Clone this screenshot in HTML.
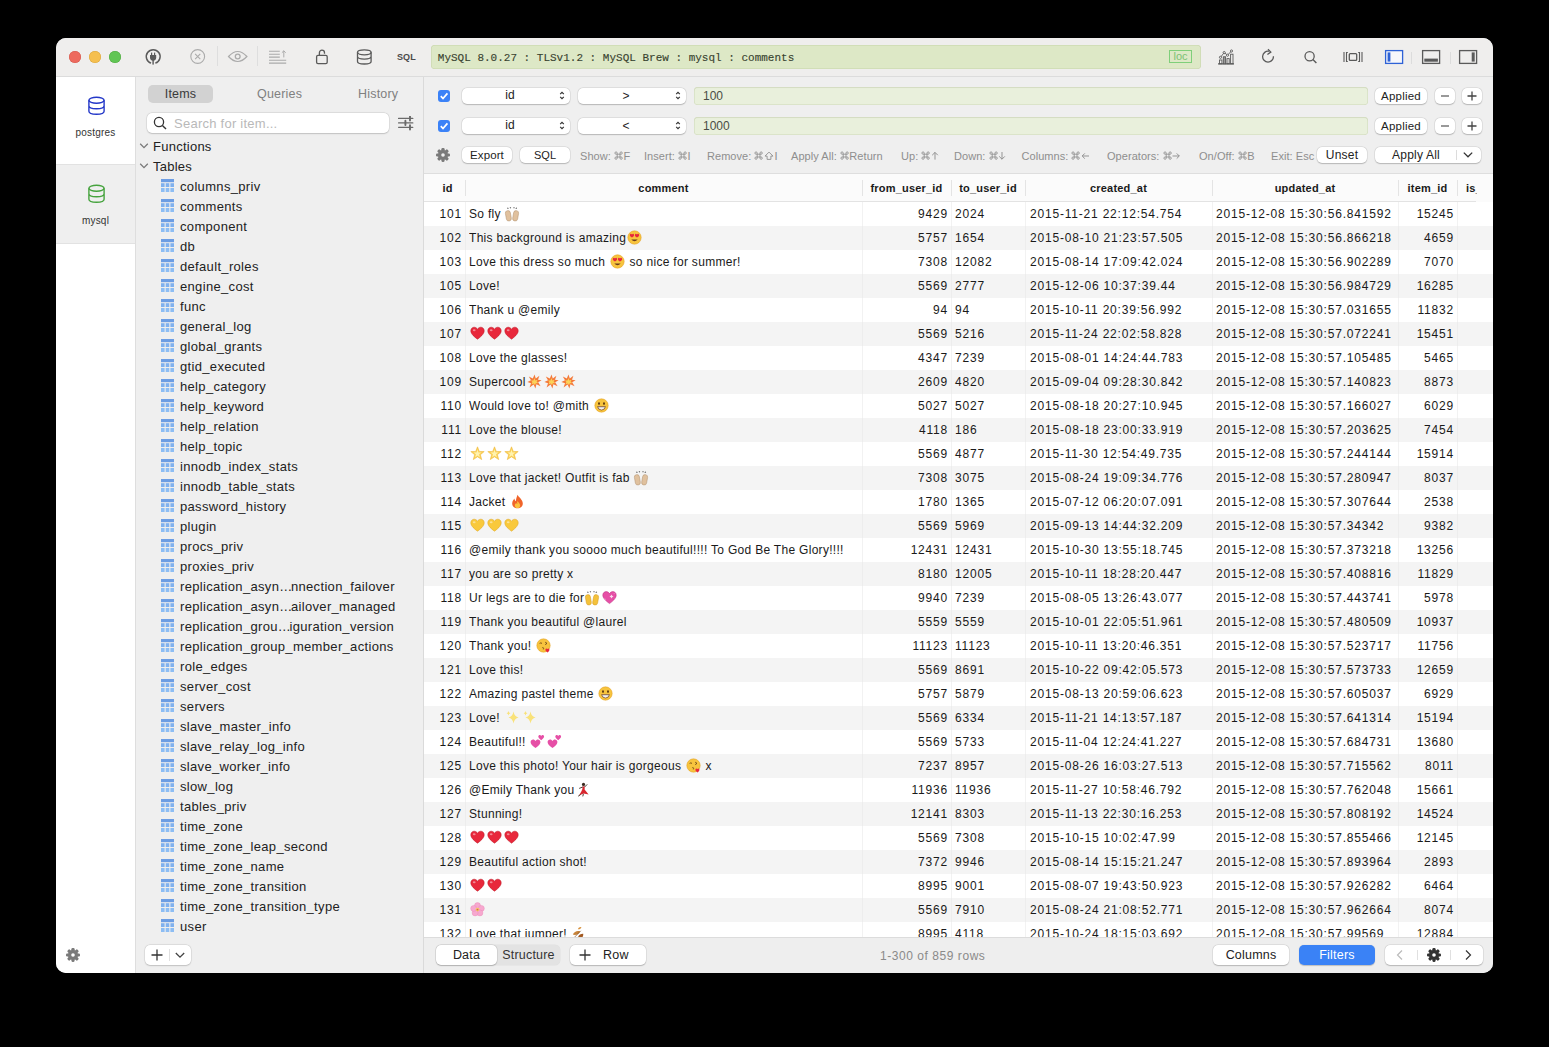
<!DOCTYPE html><html><head><meta charset="utf-8"><style>
html,body{margin:0;padding:0}
body{width:1549px;height:1047px;background:#000;position:relative;overflow:hidden;font-family:"Liberation Sans",sans-serif;color:#222}
#win{position:absolute;left:56px;top:38px;width:1437px;height:935px;border-radius:10px;overflow:hidden;background:#efefef}
#win div{position:absolute;box-sizing:border-box}
.t{white-space:pre;line-height:20px;font-size:13px;letter-spacing:0.3px}
.btn{background:#fff;border-radius:5px;box-shadow:0 0 0 0.5px rgba(0,0,0,0.09),0 0.5px 1.2px rgba(0,0,0,0.2)}
.c{white-space:pre;font-size:12px;line-height:24px;letter-spacing:0.3px;color:#1a1a1a}
.n{letter-spacing:0.8px}
</style></head><body><div id="win"><div style="left:0px;top:0px;width:1437px;height:38px;background:#efeeed"></div>
<div style="left:0px;top:38px;width:1437px;height:1px;background:#dcdcdc"></div>
<div style="left:13px;top:13px;width:12px;height:12px;border-radius:50%;background:#ed6a5e;box-shadow:inset 0 0 0 0.5px #d35a4f"></div>
<div style="left:33px;top:13px;width:12px;height:12px;border-radius:50%;background:#f5bf4f;box-shadow:inset 0 0 0 0.5px #d9a53e"></div>
<div style="left:53px;top:13px;width:12px;height:12px;border-radius:50%;background:#61c554;box-shadow:inset 0 0 0 0.5px #52a842"></div>
<svg style="position:absolute;left:88px;top:9px;" width="19" height="19" viewBox="0 0 19 19"><path d="M7.07 16.16 A6.9 6.9 0 1 1 11.33 16.16" fill="none" stroke="#5a5a5a" stroke-width="1.5"/><path d="M6 8h6.2v2.6a3.1 3.1 0 0 1-6.2 0z" fill="#5a5a5a"/><rect x="7" y="5.6" width="1.2" height="3" fill="#5a5a5a"/><rect x="10" y="5.6" width="1.2" height="3" fill="#5a5a5a"/><rect x="8.4" y="12" width="1.4" height="5.6" fill="#5a5a5a"/></svg>
<svg style="position:absolute;left:133px;top:10px;" width="18" height="18" viewBox="0 0 18 18"><circle cx="8.7" cy="8.5" r="6.9" fill="none" stroke="#ababab" stroke-width="1.1"/><path d="M6.1 5.9l5.2 5.2M11.3 5.9l-5.2 5.2" stroke="#ababab" stroke-width="1.1"/></svg>
<div style="left:161px;top:8px;width:1px;height:20px;background:#dedede"></div>
<svg style="position:absolute;left:171px;top:11px;" width="22" height="15" viewBox="0 0 22 15"><path d="M1.5 7.5 Q10.7 -2.5 19.9 7.5 Q10.7 17.5 1.5 7.5z" fill="none" stroke="#ababab" stroke-width="1.2"/><circle cx="10.7" cy="7.5" r="2.4" fill="none" stroke="#ababab" stroke-width="1.3"/></svg>
<div style="left:201px;top:8px;width:1px;height:20px;background:#dedede"></div>
<svg style="position:absolute;left:212px;top:11px;" width="20" height="16" viewBox="0 0 20 16"><path d="M1 2.3h10.8M1 5.2h10.8M1 8.1h10.8M1 11.2h17.2M1 14.1h17.2" stroke="#ababab" stroke-width="1.1"/><path d="M15.8 8.4V1.8M13.9 3.7L15.8 1.8 17.7 3.7" fill="none" stroke="#ababab" stroke-width="1"/></svg>
<svg style="position:absolute;left:258px;top:10px;" width="16" height="18" viewBox="0 0 16 18"><rect x="2.6" y="7.3" width="10.6" height="8.3" rx="1.4" fill="none" stroke="#5a5a5a" stroke-width="1.3"/><path d="M5.4 7.3V4.7a2.55 2.55 0 0 1 5.1 0v1" fill="none" stroke="#5a5a5a" stroke-width="1.3"/></svg>
<svg style="position:absolute;left:299px;top:9px;" width="19" height="19" viewBox="0 0 19 19"><ellipse cx="9.3" cy="5.3" rx="6.8" ry="2.5" fill="none" stroke="#5a5a5a" stroke-width="1.3"/><path d="M2.5 5.3v9.2c0 1.4 3 2.5 6.8 2.5s6.8-1.1 6.8-2.5V5.3M2.5 9.6c0 1.4 3 2.5 6.8 2.5s6.8-1.1 6.8-2.5" fill="none" stroke="#5a5a5a" stroke-width="1.3"/></svg>
<div class="t" style="left:341px;top:9px;font-size:9px;font-weight:bold;color:#4a4a4a;letter-spacing:0.1px">SQL</div>
<div style="left:375px;top:7px;width:770px;height:24px;background:#dde8c6;border-radius:4px;box-shadow:inset 0 0 0 0.5px #c5d3a8"></div>
<div class="t" style="left:381.8px;top:9.799999999999997px;font-family:Liberation Mono,monospace;font-size:11px;color:#38422f;letter-spacing:0;-webkit-text-stroke:0.12px #38422f">MySQL 8.0.27 : TLSv1.2 : MySQL Brew : mysql : comments</div>
<div style="left:1113px;top:12px;width:23px;height:13px;border:1px solid #7fcf7a;"></div>
<div class="t" style="left:1113px;top:8px;width:23px;text-align:center;font-size:11px;color:#7cc274;letter-spacing:0">loc</div>
<svg style="position:absolute;left:1160px;top:9px;" width="20" height="19" viewBox="0 0 20 19"><path d="M2 16.9h16" stroke="#5a5a5a" stroke-width="1.1"/><rect x="3.5" y="13" width="2.4" height="3.8" fill="none" stroke="#5a5a5a" stroke-width="0.9"/><rect x="7.3" y="9.8" width="2.3" height="7" fill="#9a9a9a" stroke="#5a5a5a" stroke-width="0.9"/><rect x="11" y="11.6" width="2.2" height="5.2" fill="none" stroke="#5a5a5a" stroke-width="0.9"/><rect x="14.6" y="7.2" width="2.4" height="9.6" fill="none" stroke="#5a5a5a" stroke-width="0.9"/><path d="M4.5 10.3L8.2 5.6 11.5 8.2 15.5 4" fill="none" stroke="#5a5a5a" stroke-width="0.9"/><circle cx="4.5" cy="10.3" r="1.1" fill="#efeeed" stroke="#5a5a5a" stroke-width="0.9"/><circle cx="8.2" cy="5.6" r="1.1" fill="#efeeed" stroke="#5a5a5a" stroke-width="0.9"/><circle cx="11.5" cy="8.2" r="1.1" fill="#efeeed" stroke="#5a5a5a" stroke-width="0.9"/><circle cx="15.5" cy="4" r="1.1" fill="#efeeed" stroke="#5a5a5a" stroke-width="0.9"/></svg>
<svg style="position:absolute;left:1203px;top:9px;" width="18" height="19" viewBox="0 0 18 19"><path d="M14.4 9.2 A5.4 5.4 0 1 1 9.9 4.3" fill="none" stroke="#5a5a5a" stroke-width="1.3"/><path d="M9 2.2 L11.8 5.1 8.4 7.6" fill="none" stroke="#5a5a5a" stroke-width="1.3" stroke-linejoin="miter"/></svg>
<svg style="position:absolute;left:1245px;top:10px;" width="18" height="18" viewBox="0 0 18 18"><circle cx="8.6" cy="8.3" r="4.6" fill="none" stroke="#5a5a5a" stroke-width="1.3"/><path d="M11.9 11.6L15.4 15.1" stroke="#5a5a5a" stroke-width="1.4"/></svg>
<svg style="position:absolute;left:1285px;top:11px;" width="22" height="16" viewBox="0 0 22 16"><path d="M3 3v10M21 3v10" stroke="#5a5a5a" stroke-width="1.1"/><path d="M6.8 3.5H5.5v9h1.3M17.2 3.5h1.3v9h-1.3" fill="none" stroke="#5a5a5a" stroke-width="1.1"/><rect x="8.3" y="4.6" width="7.4" height="6.8" rx="1" fill="none" stroke="#5a5a5a" stroke-width="1.3"/></svg>
<svg style="position:absolute;left:1328px;top:11px;" width="21" height="17" viewBox="0 0 21 17"><rect x="1.6" y="1.6" width="17" height="12.8" fill="#f6f7fb" stroke="#2e62d6" stroke-width="1.3"/><rect x="3.6" y="3.4" width="2.8" height="9.2" fill="#2e62d6"/></svg>
<div style="left:1355px;top:14px;width:1px;height:12px;background:#dcdcdc"></div>
<svg style="position:absolute;left:1365px;top:11px;" width="21" height="17" viewBox="0 0 21 17"><rect x="1.6" y="1.6" width="17" height="12.8" fill="none" stroke="#5a5a5a" stroke-width="1.3"/><rect x="3.3" y="9.6" width="13.6" height="3.1" fill="#5a5a5a"/></svg>
<div style="left:1394px;top:14px;width:1px;height:12px;background:#dcdcdc"></div>
<svg style="position:absolute;left:1402px;top:11px;" width="21" height="17" viewBox="0 0 21 17"><rect x="1.6" y="1.6" width="17" height="12.8" fill="none" stroke="#5a5a5a" stroke-width="1.3"/><rect x="13.7" y="3.4" width="3" height="9.2" fill="#5a5a5a"/></svg>
<div style="left:0px;top:39px;width:79px;height:896px;background:#ffffff"></div>
<div style="left:79px;top:39px;width:1px;height:896px;background:#dedede"></div>
<div style="left:0px;top:126px;width:79px;height:1px;background:#e2e2e2"></div>
<div style="left:0px;top:127px;width:79px;height:78px;background:#efefef"></div>
<div style="left:0px;top:205px;width:79px;height:1px;background:#e2e2e2"></div>
<svg style="position:absolute;left:31px;top:58px;" width="19" height="20" viewBox="0 0 19 20"><ellipse cx="9.5" cy="4.3" rx="7.6" ry="3" fill="none" stroke="#2438c8" stroke-width="1.4"/><path d="M1.9 4.3v11c0 1.7 3.4 3 7.6 3s7.6-1.3 7.6-3v-11M1.9 9.8c0 1.7 3.4 3 7.6 3s7.6-1.3 7.6-3" fill="none" stroke="#2438c8" stroke-width="1.4"/></svg>
<div class="t" style="left:0px;top:85px;width:79px;text-align:center;font-size:10px;color:#333;letter-spacing:0.2px">postgres</div>
<svg style="position:absolute;left:31px;top:146px;" width="19" height="20" viewBox="0 0 19 20"><ellipse cx="9.5" cy="4.3" rx="7.6" ry="3" fill="none" stroke="#46a33e" stroke-width="1.4"/><path d="M1.9 4.3v11c0 1.7 3.4 3 7.6 3s7.6-1.3 7.6-3v-11M1.9 9.8c0 1.7 3.4 3 7.6 3s7.6-1.3 7.6-3" fill="none" stroke="#46a33e" stroke-width="1.4"/></svg>
<div class="t" style="left:0px;top:173px;width:79px;text-align:center;font-size:10px;color:#333;letter-spacing:0.2px">mysql</div>
<svg style="position:absolute;left:10px;top:910px;" width="14" height="14" viewBox="0 0 14 14"><g fill="#7a7a7a"><rect x="5.39" y="0" width="3.22" height="14.00" rx="1.13" transform="rotate(0 7.0 7.0)"/><rect x="5.39" y="0" width="3.22" height="14.00" rx="1.13" transform="rotate(45 7.0 7.0)"/><rect x="5.39" y="0" width="3.22" height="14.00" rx="1.13" transform="rotate(90 7.0 7.0)"/><rect x="5.39" y="0" width="3.22" height="14.00" rx="1.13" transform="rotate(135 7.0 7.0)"/><circle cx="7.0" cy="7.0" r="5.04"/></g><circle cx="7.0" cy="7.0" r="1.82" fill="#fff"/></svg>
<div style="left:80px;top:39px;width:287px;height:896px;background:#efefef"></div>
<div style="left:367px;top:39px;width:1px;height:896px;background:#dadada"></div>
<div style="left:92px;top:47px;width:65px;height:18px;background:#d2d2d2;border-radius:5px"></div>
<div class="t" style="left:92px;top:46px;width:65px;text-align:center;font-size:12.5px;color:#3a3a3a;letter-spacing:0.2px">Items</div>
<div class="t" style="left:201px;top:46px;font-size:12.5px;color:#808080;letter-spacing:0.2px">Queries</div>
<div class="t" style="left:302px;top:46px;font-size:12.5px;color:#808080;letter-spacing:0.2px">History</div>
<div style="left:91px;top:75px;width:242px;height:20px;background:#fff;border-radius:5px;box-shadow:0 0 0 0.5px rgba(0,0,0,0.10),0 0.5px 1.5px rgba(0,0,0,0.15)"></div>
<svg style="position:absolute;left:97px;top:78px;" width="15" height="15" viewBox="0 0 15 15"><circle cx="6" cy="6" r="4.6" fill="none" stroke="#333" stroke-width="1.3"/><path d="M9.4 9.4L13 13" stroke="#333" stroke-width="1.4"/></svg>
<div class="t" style="left:118px;top:76px;font-size:13px;color:#b9b9b9;letter-spacing:0.25px">Search for item...</div>
<svg style="position:absolute;left:342px;top:78px;" width="16" height="15" viewBox="0 0 16 15"><path d="M0.6 2.4h14.2M0.6 6.9h14.2M0.6 11.3h14.2" stroke="#6a6a6a" stroke-width="1.3" stroke-linecap="round"/><path d="M12 0.2v4.4M7.4 4.7v4.4M12 9.1v4.4" stroke="#6a6a6a" stroke-width="1.9" stroke-linecap="round"/></svg>
<svg style="position:absolute;left:83px;top:104px;" width="10" height="8" viewBox="0 0 10 8"><path d="M1.2 1.8L5 5.6 8.8 1.8" fill="none" stroke="#7a7a7a" stroke-width="1.3"/></svg>
<div class="t" style="left:97px;top:98.5px;font-size:13px;color:#222;letter-spacing:0.25px">Functions</div>
<svg style="position:absolute;left:83px;top:124px;" width="10" height="8" viewBox="0 0 10 8"><path d="M1.2 1.8L5 5.6 8.8 1.8" fill="none" stroke="#7a7a7a" stroke-width="1.3"/></svg>
<div class="t" style="left:97px;top:118.5px;font-size:13px;color:#222;letter-spacing:0.25px">Tables</div>
<svg style="position:absolute;left:105px;top:141px;" width="13" height="13" viewBox="0 0 13 13"><rect x="0" y="0" width="13" height="3.2" fill="#6c9de3"/><rect x="0" y="4.2" width="3.6" height="3.8" fill="#80b1ee"/><rect x="4.7" y="4.2" width="3.6" height="3.8" fill="#80b1ee"/><rect x="9.4" y="4.2" width="3.6" height="3.8" fill="#80b1ee"/><rect x="0" y="9" width="3.6" height="4" fill="#8dbdf3"/><rect x="4.7" y="9" width="3.6" height="4" fill="#8dbdf3"/><rect x="9.4" y="9" width="3.6" height="4" fill="#8dbdf3"/></svg>
<div class="t" style="left:124px;top:138.6px;font-size:13px;color:#222;letter-spacing:0.33px">columns_priv</div>
<svg style="position:absolute;left:105px;top:161px;" width="13" height="13" viewBox="0 0 13 13"><rect x="0" y="0" width="13" height="3.2" fill="#6c9de3"/><rect x="0" y="4.2" width="3.6" height="3.8" fill="#80b1ee"/><rect x="4.7" y="4.2" width="3.6" height="3.8" fill="#80b1ee"/><rect x="9.4" y="4.2" width="3.6" height="3.8" fill="#80b1ee"/><rect x="0" y="9" width="3.6" height="4" fill="#8dbdf3"/><rect x="4.7" y="9" width="3.6" height="4" fill="#8dbdf3"/><rect x="9.4" y="9" width="3.6" height="4" fill="#8dbdf3"/></svg>
<div class="t" style="left:124px;top:158.6px;font-size:13px;color:#222;letter-spacing:0.33px">comments</div>
<svg style="position:absolute;left:105px;top:181px;" width="13" height="13" viewBox="0 0 13 13"><rect x="0" y="0" width="13" height="3.2" fill="#6c9de3"/><rect x="0" y="4.2" width="3.6" height="3.8" fill="#80b1ee"/><rect x="4.7" y="4.2" width="3.6" height="3.8" fill="#80b1ee"/><rect x="9.4" y="4.2" width="3.6" height="3.8" fill="#80b1ee"/><rect x="0" y="9" width="3.6" height="4" fill="#8dbdf3"/><rect x="4.7" y="9" width="3.6" height="4" fill="#8dbdf3"/><rect x="9.4" y="9" width="3.6" height="4" fill="#8dbdf3"/></svg>
<div class="t" style="left:124px;top:178.6px;font-size:13px;color:#222;letter-spacing:0.33px">component</div>
<svg style="position:absolute;left:105px;top:201px;" width="13" height="13" viewBox="0 0 13 13"><rect x="0" y="0" width="13" height="3.2" fill="#6c9de3"/><rect x="0" y="4.2" width="3.6" height="3.8" fill="#80b1ee"/><rect x="4.7" y="4.2" width="3.6" height="3.8" fill="#80b1ee"/><rect x="9.4" y="4.2" width="3.6" height="3.8" fill="#80b1ee"/><rect x="0" y="9" width="3.6" height="4" fill="#8dbdf3"/><rect x="4.7" y="9" width="3.6" height="4" fill="#8dbdf3"/><rect x="9.4" y="9" width="3.6" height="4" fill="#8dbdf3"/></svg>
<div class="t" style="left:124px;top:198.6px;font-size:13px;color:#222;letter-spacing:0.33px">db</div>
<svg style="position:absolute;left:105px;top:221px;" width="13" height="13" viewBox="0 0 13 13"><rect x="0" y="0" width="13" height="3.2" fill="#6c9de3"/><rect x="0" y="4.2" width="3.6" height="3.8" fill="#80b1ee"/><rect x="4.7" y="4.2" width="3.6" height="3.8" fill="#80b1ee"/><rect x="9.4" y="4.2" width="3.6" height="3.8" fill="#80b1ee"/><rect x="0" y="9" width="3.6" height="4" fill="#8dbdf3"/><rect x="4.7" y="9" width="3.6" height="4" fill="#8dbdf3"/><rect x="9.4" y="9" width="3.6" height="4" fill="#8dbdf3"/></svg>
<div class="t" style="left:124px;top:218.60000000000002px;font-size:13px;color:#222;letter-spacing:0.33px">default_roles</div>
<svg style="position:absolute;left:105px;top:241px;" width="13" height="13" viewBox="0 0 13 13"><rect x="0" y="0" width="13" height="3.2" fill="#6c9de3"/><rect x="0" y="4.2" width="3.6" height="3.8" fill="#80b1ee"/><rect x="4.7" y="4.2" width="3.6" height="3.8" fill="#80b1ee"/><rect x="9.4" y="4.2" width="3.6" height="3.8" fill="#80b1ee"/><rect x="0" y="9" width="3.6" height="4" fill="#8dbdf3"/><rect x="4.7" y="9" width="3.6" height="4" fill="#8dbdf3"/><rect x="9.4" y="9" width="3.6" height="4" fill="#8dbdf3"/></svg>
<div class="t" style="left:124px;top:238.60000000000002px;font-size:13px;color:#222;letter-spacing:0.33px">engine_cost</div>
<svg style="position:absolute;left:105px;top:261px;" width="13" height="13" viewBox="0 0 13 13"><rect x="0" y="0" width="13" height="3.2" fill="#6c9de3"/><rect x="0" y="4.2" width="3.6" height="3.8" fill="#80b1ee"/><rect x="4.7" y="4.2" width="3.6" height="3.8" fill="#80b1ee"/><rect x="9.4" y="4.2" width="3.6" height="3.8" fill="#80b1ee"/><rect x="0" y="9" width="3.6" height="4" fill="#8dbdf3"/><rect x="4.7" y="9" width="3.6" height="4" fill="#8dbdf3"/><rect x="9.4" y="9" width="3.6" height="4" fill="#8dbdf3"/></svg>
<div class="t" style="left:124px;top:258.6px;font-size:13px;color:#222;letter-spacing:0.33px">func</div>
<svg style="position:absolute;left:105px;top:281px;" width="13" height="13" viewBox="0 0 13 13"><rect x="0" y="0" width="13" height="3.2" fill="#6c9de3"/><rect x="0" y="4.2" width="3.6" height="3.8" fill="#80b1ee"/><rect x="4.7" y="4.2" width="3.6" height="3.8" fill="#80b1ee"/><rect x="9.4" y="4.2" width="3.6" height="3.8" fill="#80b1ee"/><rect x="0" y="9" width="3.6" height="4" fill="#8dbdf3"/><rect x="4.7" y="9" width="3.6" height="4" fill="#8dbdf3"/><rect x="9.4" y="9" width="3.6" height="4" fill="#8dbdf3"/></svg>
<div class="t" style="left:124px;top:278.6px;font-size:13px;color:#222;letter-spacing:0.33px">general_log</div>
<svg style="position:absolute;left:105px;top:301px;" width="13" height="13" viewBox="0 0 13 13"><rect x="0" y="0" width="13" height="3.2" fill="#6c9de3"/><rect x="0" y="4.2" width="3.6" height="3.8" fill="#80b1ee"/><rect x="4.7" y="4.2" width="3.6" height="3.8" fill="#80b1ee"/><rect x="9.4" y="4.2" width="3.6" height="3.8" fill="#80b1ee"/><rect x="0" y="9" width="3.6" height="4" fill="#8dbdf3"/><rect x="4.7" y="9" width="3.6" height="4" fill="#8dbdf3"/><rect x="9.4" y="9" width="3.6" height="4" fill="#8dbdf3"/></svg>
<div class="t" style="left:124px;top:298.6px;font-size:13px;color:#222;letter-spacing:0.33px">global_grants</div>
<svg style="position:absolute;left:105px;top:321px;" width="13" height="13" viewBox="0 0 13 13"><rect x="0" y="0" width="13" height="3.2" fill="#6c9de3"/><rect x="0" y="4.2" width="3.6" height="3.8" fill="#80b1ee"/><rect x="4.7" y="4.2" width="3.6" height="3.8" fill="#80b1ee"/><rect x="9.4" y="4.2" width="3.6" height="3.8" fill="#80b1ee"/><rect x="0" y="9" width="3.6" height="4" fill="#8dbdf3"/><rect x="4.7" y="9" width="3.6" height="4" fill="#8dbdf3"/><rect x="9.4" y="9" width="3.6" height="4" fill="#8dbdf3"/></svg>
<div class="t" style="left:124px;top:318.6px;font-size:13px;color:#222;letter-spacing:0.33px">gtid_executed</div>
<svg style="position:absolute;left:105px;top:341px;" width="13" height="13" viewBox="0 0 13 13"><rect x="0" y="0" width="13" height="3.2" fill="#6c9de3"/><rect x="0" y="4.2" width="3.6" height="3.8" fill="#80b1ee"/><rect x="4.7" y="4.2" width="3.6" height="3.8" fill="#80b1ee"/><rect x="9.4" y="4.2" width="3.6" height="3.8" fill="#80b1ee"/><rect x="0" y="9" width="3.6" height="4" fill="#8dbdf3"/><rect x="4.7" y="9" width="3.6" height="4" fill="#8dbdf3"/><rect x="9.4" y="9" width="3.6" height="4" fill="#8dbdf3"/></svg>
<div class="t" style="left:124px;top:338.6px;font-size:13px;color:#222;letter-spacing:0.33px">help_category</div>
<svg style="position:absolute;left:105px;top:361px;" width="13" height="13" viewBox="0 0 13 13"><rect x="0" y="0" width="13" height="3.2" fill="#6c9de3"/><rect x="0" y="4.2" width="3.6" height="3.8" fill="#80b1ee"/><rect x="4.7" y="4.2" width="3.6" height="3.8" fill="#80b1ee"/><rect x="9.4" y="4.2" width="3.6" height="3.8" fill="#80b1ee"/><rect x="0" y="9" width="3.6" height="4" fill="#8dbdf3"/><rect x="4.7" y="9" width="3.6" height="4" fill="#8dbdf3"/><rect x="9.4" y="9" width="3.6" height="4" fill="#8dbdf3"/></svg>
<div class="t" style="left:124px;top:358.6px;font-size:13px;color:#222;letter-spacing:0.33px">help_keyword</div>
<svg style="position:absolute;left:105px;top:381px;" width="13" height="13" viewBox="0 0 13 13"><rect x="0" y="0" width="13" height="3.2" fill="#6c9de3"/><rect x="0" y="4.2" width="3.6" height="3.8" fill="#80b1ee"/><rect x="4.7" y="4.2" width="3.6" height="3.8" fill="#80b1ee"/><rect x="9.4" y="4.2" width="3.6" height="3.8" fill="#80b1ee"/><rect x="0" y="9" width="3.6" height="4" fill="#8dbdf3"/><rect x="4.7" y="9" width="3.6" height="4" fill="#8dbdf3"/><rect x="9.4" y="9" width="3.6" height="4" fill="#8dbdf3"/></svg>
<div class="t" style="left:124px;top:378.6px;font-size:13px;color:#222;letter-spacing:0.33px">help_relation</div>
<svg style="position:absolute;left:105px;top:401px;" width="13" height="13" viewBox="0 0 13 13"><rect x="0" y="0" width="13" height="3.2" fill="#6c9de3"/><rect x="0" y="4.2" width="3.6" height="3.8" fill="#80b1ee"/><rect x="4.7" y="4.2" width="3.6" height="3.8" fill="#80b1ee"/><rect x="9.4" y="4.2" width="3.6" height="3.8" fill="#80b1ee"/><rect x="0" y="9" width="3.6" height="4" fill="#8dbdf3"/><rect x="4.7" y="9" width="3.6" height="4" fill="#8dbdf3"/><rect x="9.4" y="9" width="3.6" height="4" fill="#8dbdf3"/></svg>
<div class="t" style="left:124px;top:398.6px;font-size:13px;color:#222;letter-spacing:0.33px">help_topic</div>
<svg style="position:absolute;left:105px;top:421px;" width="13" height="13" viewBox="0 0 13 13"><rect x="0" y="0" width="13" height="3.2" fill="#6c9de3"/><rect x="0" y="4.2" width="3.6" height="3.8" fill="#80b1ee"/><rect x="4.7" y="4.2" width="3.6" height="3.8" fill="#80b1ee"/><rect x="9.4" y="4.2" width="3.6" height="3.8" fill="#80b1ee"/><rect x="0" y="9" width="3.6" height="4" fill="#8dbdf3"/><rect x="4.7" y="9" width="3.6" height="4" fill="#8dbdf3"/><rect x="9.4" y="9" width="3.6" height="4" fill="#8dbdf3"/></svg>
<div class="t" style="left:124px;top:418.6px;font-size:13px;color:#222;letter-spacing:0.33px">innodb_index_stats</div>
<svg style="position:absolute;left:105px;top:441px;" width="13" height="13" viewBox="0 0 13 13"><rect x="0" y="0" width="13" height="3.2" fill="#6c9de3"/><rect x="0" y="4.2" width="3.6" height="3.8" fill="#80b1ee"/><rect x="4.7" y="4.2" width="3.6" height="3.8" fill="#80b1ee"/><rect x="9.4" y="4.2" width="3.6" height="3.8" fill="#80b1ee"/><rect x="0" y="9" width="3.6" height="4" fill="#8dbdf3"/><rect x="4.7" y="9" width="3.6" height="4" fill="#8dbdf3"/><rect x="9.4" y="9" width="3.6" height="4" fill="#8dbdf3"/></svg>
<div class="t" style="left:124px;top:438.6px;font-size:13px;color:#222;letter-spacing:0.33px">innodb_table_stats</div>
<svg style="position:absolute;left:105px;top:461px;" width="13" height="13" viewBox="0 0 13 13"><rect x="0" y="0" width="13" height="3.2" fill="#6c9de3"/><rect x="0" y="4.2" width="3.6" height="3.8" fill="#80b1ee"/><rect x="4.7" y="4.2" width="3.6" height="3.8" fill="#80b1ee"/><rect x="9.4" y="4.2" width="3.6" height="3.8" fill="#80b1ee"/><rect x="0" y="9" width="3.6" height="4" fill="#8dbdf3"/><rect x="4.7" y="9" width="3.6" height="4" fill="#8dbdf3"/><rect x="9.4" y="9" width="3.6" height="4" fill="#8dbdf3"/></svg>
<div class="t" style="left:124px;top:458.6px;font-size:13px;color:#222;letter-spacing:0.33px">password_history</div>
<svg style="position:absolute;left:105px;top:481px;" width="13" height="13" viewBox="0 0 13 13"><rect x="0" y="0" width="13" height="3.2" fill="#6c9de3"/><rect x="0" y="4.2" width="3.6" height="3.8" fill="#80b1ee"/><rect x="4.7" y="4.2" width="3.6" height="3.8" fill="#80b1ee"/><rect x="9.4" y="4.2" width="3.6" height="3.8" fill="#80b1ee"/><rect x="0" y="9" width="3.6" height="4" fill="#8dbdf3"/><rect x="4.7" y="9" width="3.6" height="4" fill="#8dbdf3"/><rect x="9.4" y="9" width="3.6" height="4" fill="#8dbdf3"/></svg>
<div class="t" style="left:124px;top:478.6px;font-size:13px;color:#222;letter-spacing:0.33px">plugin</div>
<svg style="position:absolute;left:105px;top:501px;" width="13" height="13" viewBox="0 0 13 13"><rect x="0" y="0" width="13" height="3.2" fill="#6c9de3"/><rect x="0" y="4.2" width="3.6" height="3.8" fill="#80b1ee"/><rect x="4.7" y="4.2" width="3.6" height="3.8" fill="#80b1ee"/><rect x="9.4" y="4.2" width="3.6" height="3.8" fill="#80b1ee"/><rect x="0" y="9" width="3.6" height="4" fill="#8dbdf3"/><rect x="4.7" y="9" width="3.6" height="4" fill="#8dbdf3"/><rect x="9.4" y="9" width="3.6" height="4" fill="#8dbdf3"/></svg>
<div class="t" style="left:124px;top:498.6px;font-size:13px;color:#222;letter-spacing:0.33px">procs_priv</div>
<svg style="position:absolute;left:105px;top:521px;" width="13" height="13" viewBox="0 0 13 13"><rect x="0" y="0" width="13" height="3.2" fill="#6c9de3"/><rect x="0" y="4.2" width="3.6" height="3.8" fill="#80b1ee"/><rect x="4.7" y="4.2" width="3.6" height="3.8" fill="#80b1ee"/><rect x="9.4" y="4.2" width="3.6" height="3.8" fill="#80b1ee"/><rect x="0" y="9" width="3.6" height="4" fill="#8dbdf3"/><rect x="4.7" y="9" width="3.6" height="4" fill="#8dbdf3"/><rect x="9.4" y="9" width="3.6" height="4" fill="#8dbdf3"/></svg>
<div class="t" style="left:124px;top:518.6px;font-size:13px;color:#222;letter-spacing:0.33px">proxies_priv</div>
<svg style="position:absolute;left:105px;top:541px;" width="13" height="13" viewBox="0 0 13 13"><rect x="0" y="0" width="13" height="3.2" fill="#6c9de3"/><rect x="0" y="4.2" width="3.6" height="3.8" fill="#80b1ee"/><rect x="4.7" y="4.2" width="3.6" height="3.8" fill="#80b1ee"/><rect x="9.4" y="4.2" width="3.6" height="3.8" fill="#80b1ee"/><rect x="0" y="9" width="3.6" height="4" fill="#8dbdf3"/><rect x="4.7" y="9" width="3.6" height="4" fill="#8dbdf3"/><rect x="9.4" y="9" width="3.6" height="4" fill="#8dbdf3"/></svg>
<div class="t" style="left:124px;top:538.6px;font-size:13px;color:#222;letter-spacing:0.33px">replication_asyn<span style="letter-spacing:-1.3px">…</span>nnection_failover</div>
<svg style="position:absolute;left:105px;top:561px;" width="13" height="13" viewBox="0 0 13 13"><rect x="0" y="0" width="13" height="3.2" fill="#6c9de3"/><rect x="0" y="4.2" width="3.6" height="3.8" fill="#80b1ee"/><rect x="4.7" y="4.2" width="3.6" height="3.8" fill="#80b1ee"/><rect x="9.4" y="4.2" width="3.6" height="3.8" fill="#80b1ee"/><rect x="0" y="9" width="3.6" height="4" fill="#8dbdf3"/><rect x="4.7" y="9" width="3.6" height="4" fill="#8dbdf3"/><rect x="9.4" y="9" width="3.6" height="4" fill="#8dbdf3"/></svg>
<div class="t" style="left:124px;top:558.6px;font-size:13px;color:#222;letter-spacing:0.33px">replication_asyn<span style="letter-spacing:-1.3px">…</span>ailover_managed</div>
<svg style="position:absolute;left:105px;top:581px;" width="13" height="13" viewBox="0 0 13 13"><rect x="0" y="0" width="13" height="3.2" fill="#6c9de3"/><rect x="0" y="4.2" width="3.6" height="3.8" fill="#80b1ee"/><rect x="4.7" y="4.2" width="3.6" height="3.8" fill="#80b1ee"/><rect x="9.4" y="4.2" width="3.6" height="3.8" fill="#80b1ee"/><rect x="0" y="9" width="3.6" height="4" fill="#8dbdf3"/><rect x="4.7" y="9" width="3.6" height="4" fill="#8dbdf3"/><rect x="9.4" y="9" width="3.6" height="4" fill="#8dbdf3"/></svg>
<div class="t" style="left:124px;top:578.6px;font-size:13px;color:#222;letter-spacing:0.33px">replication_grou<span style="letter-spacing:-1.3px">…</span>iguration_version</div>
<svg style="position:absolute;left:105px;top:601px;" width="13" height="13" viewBox="0 0 13 13"><rect x="0" y="0" width="13" height="3.2" fill="#6c9de3"/><rect x="0" y="4.2" width="3.6" height="3.8" fill="#80b1ee"/><rect x="4.7" y="4.2" width="3.6" height="3.8" fill="#80b1ee"/><rect x="9.4" y="4.2" width="3.6" height="3.8" fill="#80b1ee"/><rect x="0" y="9" width="3.6" height="4" fill="#8dbdf3"/><rect x="4.7" y="9" width="3.6" height="4" fill="#8dbdf3"/><rect x="9.4" y="9" width="3.6" height="4" fill="#8dbdf3"/></svg>
<div class="t" style="left:124px;top:598.6px;font-size:13px;color:#222;letter-spacing:0.33px">replication_group_member_actions</div>
<svg style="position:absolute;left:105px;top:621px;" width="13" height="13" viewBox="0 0 13 13"><rect x="0" y="0" width="13" height="3.2" fill="#6c9de3"/><rect x="0" y="4.2" width="3.6" height="3.8" fill="#80b1ee"/><rect x="4.7" y="4.2" width="3.6" height="3.8" fill="#80b1ee"/><rect x="9.4" y="4.2" width="3.6" height="3.8" fill="#80b1ee"/><rect x="0" y="9" width="3.6" height="4" fill="#8dbdf3"/><rect x="4.7" y="9" width="3.6" height="4" fill="#8dbdf3"/><rect x="9.4" y="9" width="3.6" height="4" fill="#8dbdf3"/></svg>
<div class="t" style="left:124px;top:618.6px;font-size:13px;color:#222;letter-spacing:0.33px">role_edges</div>
<svg style="position:absolute;left:105px;top:641px;" width="13" height="13" viewBox="0 0 13 13"><rect x="0" y="0" width="13" height="3.2" fill="#6c9de3"/><rect x="0" y="4.2" width="3.6" height="3.8" fill="#80b1ee"/><rect x="4.7" y="4.2" width="3.6" height="3.8" fill="#80b1ee"/><rect x="9.4" y="4.2" width="3.6" height="3.8" fill="#80b1ee"/><rect x="0" y="9" width="3.6" height="4" fill="#8dbdf3"/><rect x="4.7" y="9" width="3.6" height="4" fill="#8dbdf3"/><rect x="9.4" y="9" width="3.6" height="4" fill="#8dbdf3"/></svg>
<div class="t" style="left:124px;top:638.6px;font-size:13px;color:#222;letter-spacing:0.33px">server_cost</div>
<svg style="position:absolute;left:105px;top:661px;" width="13" height="13" viewBox="0 0 13 13"><rect x="0" y="0" width="13" height="3.2" fill="#6c9de3"/><rect x="0" y="4.2" width="3.6" height="3.8" fill="#80b1ee"/><rect x="4.7" y="4.2" width="3.6" height="3.8" fill="#80b1ee"/><rect x="9.4" y="4.2" width="3.6" height="3.8" fill="#80b1ee"/><rect x="0" y="9" width="3.6" height="4" fill="#8dbdf3"/><rect x="4.7" y="9" width="3.6" height="4" fill="#8dbdf3"/><rect x="9.4" y="9" width="3.6" height="4" fill="#8dbdf3"/></svg>
<div class="t" style="left:124px;top:658.6px;font-size:13px;color:#222;letter-spacing:0.33px">servers</div>
<svg style="position:absolute;left:105px;top:681px;" width="13" height="13" viewBox="0 0 13 13"><rect x="0" y="0" width="13" height="3.2" fill="#6c9de3"/><rect x="0" y="4.2" width="3.6" height="3.8" fill="#80b1ee"/><rect x="4.7" y="4.2" width="3.6" height="3.8" fill="#80b1ee"/><rect x="9.4" y="4.2" width="3.6" height="3.8" fill="#80b1ee"/><rect x="0" y="9" width="3.6" height="4" fill="#8dbdf3"/><rect x="4.7" y="9" width="3.6" height="4" fill="#8dbdf3"/><rect x="9.4" y="9" width="3.6" height="4" fill="#8dbdf3"/></svg>
<div class="t" style="left:124px;top:678.6px;font-size:13px;color:#222;letter-spacing:0.33px">slave_master_info</div>
<svg style="position:absolute;left:105px;top:701px;" width="13" height="13" viewBox="0 0 13 13"><rect x="0" y="0" width="13" height="3.2" fill="#6c9de3"/><rect x="0" y="4.2" width="3.6" height="3.8" fill="#80b1ee"/><rect x="4.7" y="4.2" width="3.6" height="3.8" fill="#80b1ee"/><rect x="9.4" y="4.2" width="3.6" height="3.8" fill="#80b1ee"/><rect x="0" y="9" width="3.6" height="4" fill="#8dbdf3"/><rect x="4.7" y="9" width="3.6" height="4" fill="#8dbdf3"/><rect x="9.4" y="9" width="3.6" height="4" fill="#8dbdf3"/></svg>
<div class="t" style="left:124px;top:698.6px;font-size:13px;color:#222;letter-spacing:0.33px">slave_relay_log_info</div>
<svg style="position:absolute;left:105px;top:721px;" width="13" height="13" viewBox="0 0 13 13"><rect x="0" y="0" width="13" height="3.2" fill="#6c9de3"/><rect x="0" y="4.2" width="3.6" height="3.8" fill="#80b1ee"/><rect x="4.7" y="4.2" width="3.6" height="3.8" fill="#80b1ee"/><rect x="9.4" y="4.2" width="3.6" height="3.8" fill="#80b1ee"/><rect x="0" y="9" width="3.6" height="4" fill="#8dbdf3"/><rect x="4.7" y="9" width="3.6" height="4" fill="#8dbdf3"/><rect x="9.4" y="9" width="3.6" height="4" fill="#8dbdf3"/></svg>
<div class="t" style="left:124px;top:718.6px;font-size:13px;color:#222;letter-spacing:0.33px">slave_worker_info</div>
<svg style="position:absolute;left:105px;top:741px;" width="13" height="13" viewBox="0 0 13 13"><rect x="0" y="0" width="13" height="3.2" fill="#6c9de3"/><rect x="0" y="4.2" width="3.6" height="3.8" fill="#80b1ee"/><rect x="4.7" y="4.2" width="3.6" height="3.8" fill="#80b1ee"/><rect x="9.4" y="4.2" width="3.6" height="3.8" fill="#80b1ee"/><rect x="0" y="9" width="3.6" height="4" fill="#8dbdf3"/><rect x="4.7" y="9" width="3.6" height="4" fill="#8dbdf3"/><rect x="9.4" y="9" width="3.6" height="4" fill="#8dbdf3"/></svg>
<div class="t" style="left:124px;top:738.6px;font-size:13px;color:#222;letter-spacing:0.33px">slow_log</div>
<svg style="position:absolute;left:105px;top:761px;" width="13" height="13" viewBox="0 0 13 13"><rect x="0" y="0" width="13" height="3.2" fill="#6c9de3"/><rect x="0" y="4.2" width="3.6" height="3.8" fill="#80b1ee"/><rect x="4.7" y="4.2" width="3.6" height="3.8" fill="#80b1ee"/><rect x="9.4" y="4.2" width="3.6" height="3.8" fill="#80b1ee"/><rect x="0" y="9" width="3.6" height="4" fill="#8dbdf3"/><rect x="4.7" y="9" width="3.6" height="4" fill="#8dbdf3"/><rect x="9.4" y="9" width="3.6" height="4" fill="#8dbdf3"/></svg>
<div class="t" style="left:124px;top:758.6px;font-size:13px;color:#222;letter-spacing:0.33px">tables_priv</div>
<svg style="position:absolute;left:105px;top:781px;" width="13" height="13" viewBox="0 0 13 13"><rect x="0" y="0" width="13" height="3.2" fill="#6c9de3"/><rect x="0" y="4.2" width="3.6" height="3.8" fill="#80b1ee"/><rect x="4.7" y="4.2" width="3.6" height="3.8" fill="#80b1ee"/><rect x="9.4" y="4.2" width="3.6" height="3.8" fill="#80b1ee"/><rect x="0" y="9" width="3.6" height="4" fill="#8dbdf3"/><rect x="4.7" y="9" width="3.6" height="4" fill="#8dbdf3"/><rect x="9.4" y="9" width="3.6" height="4" fill="#8dbdf3"/></svg>
<div class="t" style="left:124px;top:778.6px;font-size:13px;color:#222;letter-spacing:0.33px">time_zone</div>
<svg style="position:absolute;left:105px;top:801px;" width="13" height="13" viewBox="0 0 13 13"><rect x="0" y="0" width="13" height="3.2" fill="#6c9de3"/><rect x="0" y="4.2" width="3.6" height="3.8" fill="#80b1ee"/><rect x="4.7" y="4.2" width="3.6" height="3.8" fill="#80b1ee"/><rect x="9.4" y="4.2" width="3.6" height="3.8" fill="#80b1ee"/><rect x="0" y="9" width="3.6" height="4" fill="#8dbdf3"/><rect x="4.7" y="9" width="3.6" height="4" fill="#8dbdf3"/><rect x="9.4" y="9" width="3.6" height="4" fill="#8dbdf3"/></svg>
<div class="t" style="left:124px;top:798.6px;font-size:13px;color:#222;letter-spacing:0.33px">time_zone_leap_second</div>
<svg style="position:absolute;left:105px;top:821px;" width="13" height="13" viewBox="0 0 13 13"><rect x="0" y="0" width="13" height="3.2" fill="#6c9de3"/><rect x="0" y="4.2" width="3.6" height="3.8" fill="#80b1ee"/><rect x="4.7" y="4.2" width="3.6" height="3.8" fill="#80b1ee"/><rect x="9.4" y="4.2" width="3.6" height="3.8" fill="#80b1ee"/><rect x="0" y="9" width="3.6" height="4" fill="#8dbdf3"/><rect x="4.7" y="9" width="3.6" height="4" fill="#8dbdf3"/><rect x="9.4" y="9" width="3.6" height="4" fill="#8dbdf3"/></svg>
<div class="t" style="left:124px;top:818.6px;font-size:13px;color:#222;letter-spacing:0.33px">time_zone_name</div>
<svg style="position:absolute;left:105px;top:841px;" width="13" height="13" viewBox="0 0 13 13"><rect x="0" y="0" width="13" height="3.2" fill="#6c9de3"/><rect x="0" y="4.2" width="3.6" height="3.8" fill="#80b1ee"/><rect x="4.7" y="4.2" width="3.6" height="3.8" fill="#80b1ee"/><rect x="9.4" y="4.2" width="3.6" height="3.8" fill="#80b1ee"/><rect x="0" y="9" width="3.6" height="4" fill="#8dbdf3"/><rect x="4.7" y="9" width="3.6" height="4" fill="#8dbdf3"/><rect x="9.4" y="9" width="3.6" height="4" fill="#8dbdf3"/></svg>
<div class="t" style="left:124px;top:838.6px;font-size:13px;color:#222;letter-spacing:0.33px">time_zone_transition</div>
<svg style="position:absolute;left:105px;top:861px;" width="13" height="13" viewBox="0 0 13 13"><rect x="0" y="0" width="13" height="3.2" fill="#6c9de3"/><rect x="0" y="4.2" width="3.6" height="3.8" fill="#80b1ee"/><rect x="4.7" y="4.2" width="3.6" height="3.8" fill="#80b1ee"/><rect x="9.4" y="4.2" width="3.6" height="3.8" fill="#80b1ee"/><rect x="0" y="9" width="3.6" height="4" fill="#8dbdf3"/><rect x="4.7" y="9" width="3.6" height="4" fill="#8dbdf3"/><rect x="9.4" y="9" width="3.6" height="4" fill="#8dbdf3"/></svg>
<div class="t" style="left:124px;top:858.6px;font-size:13px;color:#222;letter-spacing:0.33px">time_zone_transition_type</div>
<svg style="position:absolute;left:105px;top:881px;" width="13" height="13" viewBox="0 0 13 13"><rect x="0" y="0" width="13" height="3.2" fill="#6c9de3"/><rect x="0" y="4.2" width="3.6" height="3.8" fill="#80b1ee"/><rect x="4.7" y="4.2" width="3.6" height="3.8" fill="#80b1ee"/><rect x="9.4" y="4.2" width="3.6" height="3.8" fill="#80b1ee"/><rect x="0" y="9" width="3.6" height="4" fill="#8dbdf3"/><rect x="4.7" y="9" width="3.6" height="4" fill="#8dbdf3"/><rect x="9.4" y="9" width="3.6" height="4" fill="#8dbdf3"/></svg>
<div class="t" style="left:124px;top:878.6px;font-size:13px;color:#222;letter-spacing:0.33px">user</div>
<div style="left:89px;top:907px;width:46px;height:20px;background:#fff;border-radius:5px;box-shadow:0 0 0 0.5px rgba(0,0,0,0.10),0 0.5px 1.5px rgba(0,0,0,0.15)"></div>
<svg style="position:absolute;left:94px;top:910px;" width="14" height="14" viewBox="0 0 14 14"><path d="M7 1.5v11M1.5 7h11" stroke="#333" stroke-width="1.3"/></svg>
<div style="left:113px;top:911px;width:1px;height:12px;background:#e0e0e0"></div>
<svg style="position:absolute;left:118px;top:912px;" width="12" height="10" viewBox="0 0 12 10"><path d="M1.8 3L6 7.2 10.2 3" fill="none" stroke="#444" stroke-width="1.3"/></svg>
<div style="left:368px;top:39px;width:1069px;height:96px;background:#efefef"></div>
<div style="left:368px;top:135px;width:1069px;height:1px;background:#dedede"></div>
<div style="left:382px;top:52px;width:12px;height:12px;background:#3b82f7;border-radius:3px"></div>
<svg style="position:absolute;left:382px;top:52px;" width="12" height="12" viewBox="0 0 12 12"><path d="M2.8 6.2L5 8.5 9.4 3.4" fill="none" stroke="#fff" stroke-width="1.7"/></svg>
<div class="btn" style="left:406px;top:50px;width:108px;height:16px;"></div>
<div class="t" style="left:406px;top:47px;width:96px;text-align:center;font-size:12px;color:#222;letter-spacing:0.2px">id</div>
<svg style="position:absolute;left:502px;top:52px;" width="8" height="11" viewBox="0 0 8 11"><path d="M2.2 4.2L4 2.4 5.8 4.2M2.2 6.8L4 8.6 5.8 6.8" fill="none" stroke="#333" stroke-width="1.2"/></svg>
<div class="btn" style="left:522px;top:50px;width:108px;height:16px;"></div>
<div class="t" style="left:522px;top:48px;width:96px;text-align:center;font-size:12px;color:#222;letter-spacing:0">&gt;</div>
<svg style="position:absolute;left:618px;top:52px;" width="8" height="11" viewBox="0 0 8 11"><path d="M2.2 4.2L4 2.4 5.8 4.2M2.2 6.8L4 8.6 5.8 6.8" fill="none" stroke="#333" stroke-width="1.2"/></svg>
<div style="left:638px;top:49px;width:674px;height:18px;background:#e9f0dc;border-radius:4px;box-shadow:inset 0 0 0 0.5px #cdd8b6,inset 0 1px 1px rgba(0,0,0,0.06)"></div>
<div class="t" style="left:647px;top:48px;font-size:12px;color:#4a4d45;letter-spacing:0px">100</div>
<div class="btn" style="left:1319px;top:50px;width:52px;height:16px;"></div>
<div class="t" style="left:1319px;top:48px;width:52px;text-align:center;font-size:11.5px;color:#222;letter-spacing:0.2px">Applied</div>
<div class="btn" style="left:1379px;top:50px;width:20px;height:16px;"></div>
<svg style="position:absolute;left:1383px;top:52px;" width="12" height="12" viewBox="0 0 12 12"><path d="M2 6h8" stroke="#777" stroke-width="1.3"/></svg>
<div class="btn" style="left:1406px;top:50px;width:20px;height:16px;"></div>
<svg style="position:absolute;left:1410px;top:52px;" width="12" height="12" viewBox="0 0 12 12"><path d="M6 1.5v9M1.5 6h9" stroke="#444" stroke-width="1.3"/></svg>
<div style="left:382px;top:82px;width:12px;height:12px;background:#3b82f7;border-radius:3px"></div>
<svg style="position:absolute;left:382px;top:82px;" width="12" height="12" viewBox="0 0 12 12"><path d="M2.8 6.2L5 8.5 9.4 3.4" fill="none" stroke="#fff" stroke-width="1.7"/></svg>
<div class="btn" style="left:406px;top:80px;width:108px;height:16px;"></div>
<div class="t" style="left:406px;top:77px;width:96px;text-align:center;font-size:12px;color:#222;letter-spacing:0.2px">id</div>
<svg style="position:absolute;left:502px;top:82px;" width="8" height="11" viewBox="0 0 8 11"><path d="M2.2 4.2L4 2.4 5.8 4.2M2.2 6.8L4 8.6 5.8 6.8" fill="none" stroke="#333" stroke-width="1.2"/></svg>
<div class="btn" style="left:522px;top:80px;width:108px;height:16px;"></div>
<div class="t" style="left:522px;top:78px;width:96px;text-align:center;font-size:12px;color:#222;letter-spacing:0">&lt;</div>
<svg style="position:absolute;left:618px;top:82px;" width="8" height="11" viewBox="0 0 8 11"><path d="M2.2 4.2L4 2.4 5.8 4.2M2.2 6.8L4 8.6 5.8 6.8" fill="none" stroke="#333" stroke-width="1.2"/></svg>
<div style="left:638px;top:79px;width:674px;height:18px;background:#e9f0dc;border-radius:4px;box-shadow:inset 0 0 0 0.5px #cdd8b6,inset 0 1px 1px rgba(0,0,0,0.06)"></div>
<div class="t" style="left:647px;top:78px;font-size:12px;color:#4a4d45;letter-spacing:0px">1000</div>
<div class="btn" style="left:1319px;top:80px;width:52px;height:16px;"></div>
<div class="t" style="left:1319px;top:78px;width:52px;text-align:center;font-size:11.5px;color:#222;letter-spacing:0.2px">Applied</div>
<div class="btn" style="left:1379px;top:80px;width:20px;height:16px;"></div>
<svg style="position:absolute;left:1383px;top:82px;" width="12" height="12" viewBox="0 0 12 12"><path d="M2 6h8" stroke="#777" stroke-width="1.3"/></svg>
<div class="btn" style="left:1406px;top:80px;width:20px;height:16px;"></div>
<svg style="position:absolute;left:1410px;top:82px;" width="12" height="12" viewBox="0 0 12 12"><path d="M6 1.5v9M1.5 6h9" stroke="#444" stroke-width="1.3"/></svg>
<svg style="position:absolute;left:380px;top:110px;" width="14" height="14" viewBox="0 0 14 14"><g fill="#7a7a7a"><rect x="5.39" y="0" width="3.22" height="14.00" rx="1.13" transform="rotate(0 7.0 7.0)"/><rect x="5.39" y="0" width="3.22" height="14.00" rx="1.13" transform="rotate(45 7.0 7.0)"/><rect x="5.39" y="0" width="3.22" height="14.00" rx="1.13" transform="rotate(90 7.0 7.0)"/><rect x="5.39" y="0" width="3.22" height="14.00" rx="1.13" transform="rotate(135 7.0 7.0)"/><circle cx="7.0" cy="7.0" r="5.04"/></g><circle cx="7.0" cy="7.0" r="1.82" fill="#efefef"/></svg>
<div class="btn" style="left:406px;top:109px;width:50px;height:16px;"></div>
<div class="t" style="left:406px;top:107px;width:50px;text-align:center;font-size:11.5px;color:#222;letter-spacing:0.1px">Export</div>
<div class="btn" style="left:464px;top:109px;width:50px;height:16px;"></div>
<div class="t" style="left:464px;top:107px;width:50px;text-align:center;font-size:11px;color:#222;letter-spacing:0px">SQL</div>
<div class="t" style="left:524px;top:108px;font-size:11px;color:#8e8e8e;letter-spacing:0.05px">Show: <svg width="9.5" height="9" viewBox="0 0 9.5 9" style="vertical-align:0px;overflow:visible"><path d="M3.2 3.2H6V6H3.2ZM3.2 3.2V2.1A1.15 1.15 0 1 0 2.05 3.2H3.2M6 3.2V2.1A1.15 1.15 0 1 1 7.15 3.2H6M3.2 6V7.1A1.15 1.15 0 1 1 2.05 6H3.2M6 6V7.1A1.15 1.15 0 1 0 7.15 6H6" fill="none" stroke="#8e8e8e" stroke-width="0.85"/></svg>F</div>
<div class="t" style="left:588px;top:108px;font-size:11px;color:#8e8e8e;letter-spacing:0.05px">Insert: <svg width="9.5" height="9" viewBox="0 0 9.5 9" style="vertical-align:0px;overflow:visible"><path d="M3.2 3.2H6V6H3.2ZM3.2 3.2V2.1A1.15 1.15 0 1 0 2.05 3.2H3.2M6 3.2V2.1A1.15 1.15 0 1 1 7.15 3.2H6M3.2 6V7.1A1.15 1.15 0 1 1 2.05 6H3.2M6 6V7.1A1.15 1.15 0 1 0 7.15 6H6" fill="none" stroke="#8e8e8e" stroke-width="0.85"/></svg>I</div>
<div class="t" style="left:651px;top:108px;font-size:11px;color:#8e8e8e;letter-spacing:0.05px">Remove: <svg width="9.5" height="9" viewBox="0 0 9.5 9" style="vertical-align:0px;overflow:visible"><path d="M3.2 3.2H6V6H3.2ZM3.2 3.2V2.1A1.15 1.15 0 1 0 2.05 3.2H3.2M6 3.2V2.1A1.15 1.15 0 1 1 7.15 3.2H6M3.2 6V7.1A1.15 1.15 0 1 1 2.05 6H3.2M6 6V7.1A1.15 1.15 0 1 0 7.15 6H6" fill="none" stroke="#8e8e8e" stroke-width="0.85"/></svg><svg width="10.5" height="9" viewBox="0 0 10.5 9" style="vertical-align:0px;overflow:visible"><path d="M5 1.1L9 5.1H6.9V8.4H3.1V5.1H1Z" fill="none" stroke="#8e8e8e" stroke-width="0.9" stroke-linejoin="round"/></svg>I</div>
<div class="t" style="left:735px;top:108px;font-size:11px;color:#8e8e8e;letter-spacing:0.05px">Apply All: <svg width="9.5" height="9" viewBox="0 0 9.5 9" style="vertical-align:0px;overflow:visible"><path d="M3.2 3.2H6V6H3.2ZM3.2 3.2V2.1A1.15 1.15 0 1 0 2.05 3.2H3.2M6 3.2V2.1A1.15 1.15 0 1 1 7.15 3.2H6M3.2 6V7.1A1.15 1.15 0 1 1 2.05 6H3.2M6 6V7.1A1.15 1.15 0 1 0 7.15 6H6" fill="none" stroke="#8e8e8e" stroke-width="0.85"/></svg>Return</div>
<div class="t" style="left:845px;top:108px;font-size:11px;color:#8e8e8e;letter-spacing:0.05px">Up: <svg width="9.5" height="9" viewBox="0 0 9.5 9" style="vertical-align:0px;overflow:visible"><path d="M3.2 3.2H6V6H3.2ZM3.2 3.2V2.1A1.15 1.15 0 1 0 2.05 3.2H3.2M6 3.2V2.1A1.15 1.15 0 1 1 7.15 3.2H6M3.2 6V7.1A1.15 1.15 0 1 1 2.05 6H3.2M6 6V7.1A1.15 1.15 0 1 0 7.15 6H6" fill="none" stroke="#8e8e8e" stroke-width="0.85"/></svg><svg width="8" height="9" viewBox="0 0 8 9" style="vertical-align:0px;overflow:visible"><path d="M4 8.6V1.4M1.2 4.2L4 1.4 6.8 4.2" fill="none" stroke="#8e8e8e" stroke-width="0.95"/></svg></div>
<div class="t" style="left:898px;top:108px;font-size:11px;color:#8e8e8e;letter-spacing:0.05px">Down: <svg width="9.5" height="9" viewBox="0 0 9.5 9" style="vertical-align:0px;overflow:visible"><path d="M3.2 3.2H6V6H3.2ZM3.2 3.2V2.1A1.15 1.15 0 1 0 2.05 3.2H3.2M6 3.2V2.1A1.15 1.15 0 1 1 7.15 3.2H6M3.2 6V7.1A1.15 1.15 0 1 1 2.05 6H3.2M6 6V7.1A1.15 1.15 0 1 0 7.15 6H6" fill="none" stroke="#8e8e8e" stroke-width="0.85"/></svg><svg width="8" height="9" viewBox="0 0 8 9" style="vertical-align:0px;overflow:visible"><path d="M4 1V8.2M1.2 5.4L4 8.2 6.8 5.4" fill="none" stroke="#8e8e8e" stroke-width="0.95"/></svg></div>
<div class="t" style="left:965.5px;top:108px;font-size:11px;color:#8e8e8e;letter-spacing:0.05px">Columns: <svg width="9.5" height="9" viewBox="0 0 9.5 9" style="vertical-align:0px;overflow:visible"><path d="M3.2 3.2H6V6H3.2ZM3.2 3.2V2.1A1.15 1.15 0 1 0 2.05 3.2H3.2M6 3.2V2.1A1.15 1.15 0 1 1 7.15 3.2H6M3.2 6V7.1A1.15 1.15 0 1 1 2.05 6H3.2M6 6V7.1A1.15 1.15 0 1 0 7.15 6H6" fill="none" stroke="#8e8e8e" stroke-width="0.85"/></svg><svg width="8.5" height="9" viewBox="0 0 8.5 9" style="vertical-align:0px;overflow:visible"><path d="M8 5H1.2M3.8 2.4L1.2 5 3.8 7.6" fill="none" stroke="#8e8e8e" stroke-width="0.95"/></svg></div>
<div class="t" style="left:1051px;top:108px;font-size:11px;color:#8e8e8e;letter-spacing:0.05px">Operators: <svg width="9.5" height="9" viewBox="0 0 9.5 9" style="vertical-align:0px;overflow:visible"><path d="M3.2 3.2H6V6H3.2ZM3.2 3.2V2.1A1.15 1.15 0 1 0 2.05 3.2H3.2M6 3.2V2.1A1.15 1.15 0 1 1 7.15 3.2H6M3.2 6V7.1A1.15 1.15 0 1 1 2.05 6H3.2M6 6V7.1A1.15 1.15 0 1 0 7.15 6H6" fill="none" stroke="#8e8e8e" stroke-width="0.85"/></svg><svg width="8.5" height="9" viewBox="0 0 8.5 9" style="vertical-align:0px;overflow:visible"><path d="M0.5 5H7.3M4.7 2.4L7.3 5 4.7 7.6" fill="none" stroke="#8e8e8e" stroke-width="0.95"/></svg></div>
<div class="t" style="left:1143px;top:108px;font-size:11px;color:#8e8e8e;letter-spacing:0.05px">On/Off: <svg width="9.5" height="9" viewBox="0 0 9.5 9" style="vertical-align:0px;overflow:visible"><path d="M3.2 3.2H6V6H3.2ZM3.2 3.2V2.1A1.15 1.15 0 1 0 2.05 3.2H3.2M6 3.2V2.1A1.15 1.15 0 1 1 7.15 3.2H6M3.2 6V7.1A1.15 1.15 0 1 1 2.05 6H3.2M6 6V7.1A1.15 1.15 0 1 0 7.15 6H6" fill="none" stroke="#8e8e8e" stroke-width="0.85"/></svg>B</div>
<div class="t" style="left:1215px;top:108px;font-size:11px;color:#8e8e8e;letter-spacing:0.05px">Exit: Esc</div>
<div class="btn" style="left:1261px;top:109px;width:50px;height:16px;"></div>
<div class="t" style="left:1261px;top:107px;width:50px;text-align:center;font-size:12px;color:#222;letter-spacing:0.2px">Unset</div>
<div class="btn" style="left:1319px;top:109px;width:106px;height:16px;"></div>
<div class="t" style="left:1319px;top:107px;width:82px;text-align:center;font-size:12px;color:#222;letter-spacing:0.2px">Apply All</div>
<div style="left:1400px;top:112px;width:1px;height:10px;background:#dcdcdc"></div>
<svg style="position:absolute;left:1406px;top:112px;" width="12" height="10" viewBox="0 0 12 10"><path d="M1.8 2.6L6 6.8 10.2 2.6" fill="none" stroke="#333" stroke-width="1.3"/></svg>
<div style="left:368px;top:136px;width:1069px;height:763px;overflow:hidden;background:#fff">
<div style="left:0px;top:0px;width:1069px;height:28px;background:#fbfbfb"></div>
<div style="left:0px;top:27px;width:1052px;height:1px;background:#e3e3e3"></div>
<div style="left:41px;top:6px;width:1px;height:16px;background:#e4e4e4"></div>
<div style="left:438px;top:6px;width:1px;height:16px;background:#e4e4e4"></div>
<div style="left:527px;top:6px;width:1px;height:16px;background:#e4e4e4"></div>
<div style="left:601px;top:6px;width:1px;height:16px;background:#e4e4e4"></div>
<div style="left:788px;top:6px;width:1px;height:16px;background:#e4e4e4"></div>
<div style="left:974px;top:6px;width:1px;height:16px;background:#e4e4e4"></div>
<div style="left:1033px;top:6px;width:1px;height:16px;background:#e4e4e4"></div>
<div class="c" style="left:3px;top:2px;width:41px;text-align:center;font-weight:bold;font-size:11px;line-height:24px;letter-spacing:0.2px">id</div>
<div class="c" style="left:41px;top:2px;width:397px;text-align:center;font-weight:bold;font-size:11px;line-height:24px;letter-spacing:0.2px">comment</div>
<div class="c" style="left:438px;top:2px;width:89px;text-align:center;font-weight:bold;font-size:11px;line-height:24px;letter-spacing:0.2px">from_user_id</div>
<div class="c" style="left:527px;top:2px;width:74px;text-align:center;font-weight:bold;font-size:11px;line-height:24px;letter-spacing:0.2px">to_user_id</div>
<div class="c" style="left:601px;top:2px;width:187px;text-align:center;font-weight:bold;font-size:11px;line-height:24px;letter-spacing:0.2px">created_at</div>
<div class="c" style="left:788px;top:2px;width:186px;text-align:center;font-weight:bold;font-size:11px;line-height:24px;letter-spacing:0.2px">updated_at</div>
<div class="c" style="left:974px;top:2px;width:59px;text-align:center;font-weight:bold;font-size:11px;line-height:24px;letter-spacing:0.2px">item_id</div>
<div class="c" style="left:1042px;top:2px;width:11px;overflow:hidden;font-weight:bold;font-size:11px;line-height:24px;letter-spacing:0.2px">is_</div>
<div style="left:0px;top:28px;width:1069px;height:24px;background:#ffffff"></div>
<div style="left:41px;top:28px;width:1px;height:24px;background:#f2f2f2"></div>
<div style="left:438px;top:28px;width:1px;height:24px;background:#f2f2f2"></div>
<div style="left:527px;top:28px;width:1px;height:24px;background:#f2f2f2"></div>
<div style="left:601px;top:28px;width:1px;height:24px;background:#f2f2f2"></div>
<div style="left:788px;top:28px;width:1px;height:24px;background:#f2f2f2"></div>
<div style="left:974px;top:28px;width:1px;height:24px;background:#f2f2f2"></div>
<div style="left:1033px;top:28px;width:1px;height:24px;background:#f2f2f2"></div>
<div class="c n" style="left:0px;top:28px;width:38px;text-align:right">101</div>
<div class="c" style="left:45px;top:28px;width:390px;overflow:hidden">So fly <svg width="17" height="15" viewBox="0 0 17 15" style="vertical-align:-3px;overflow:visible"><g transform="translate(1,0)"><g fill="#e0c19e" stroke="#b39371" stroke-width="0.5"><rect x="0.9" y="4.6" width="5" height="10.4" rx="2.4" transform="rotate(-10 3.4 10)"/><rect x="8.1" y="4.6" width="5" height="10.4" rx="2.4" transform="rotate(10 10.6 10)"/></g><g fill="#555"><path d="M2 2.8l.9-1.6.9 1.6z"/><path d="M4.6 1.3h1.6l-.8 1.5z"/><path d="M8.2 1.3h1.6l-.8 1.5z"/><path d="M10.4 2.8l.9-1.6.9 1.6z"/></g></g></svg></div>
<div class="c n" style="left:438px;top:28px;width:86px;text-align:right">9429</div>
<div class="c n" style="left:531px;top:28px;">2024</div>
<div class="c n" style="left:606px;top:28px;">2015-11-21 22:12:54.754</div>
<div class="c n" style="left:792px;top:28px;">2015-12-08 15:30:56.841592</div>
<div class="c n" style="left:974px;top:28px;width:56px;text-align:right">15245</div>
<div style="left:0px;top:52px;width:1069px;height:24px;background:#f4f4f4"></div>
<div style="left:41px;top:52px;width:1px;height:24px;background:#ededed"></div>
<div style="left:438px;top:52px;width:1px;height:24px;background:#ededed"></div>
<div style="left:527px;top:52px;width:1px;height:24px;background:#ededed"></div>
<div style="left:601px;top:52px;width:1px;height:24px;background:#ededed"></div>
<div style="left:788px;top:52px;width:1px;height:24px;background:#ededed"></div>
<div style="left:974px;top:52px;width:1px;height:24px;background:#ededed"></div>
<div style="left:1033px;top:52px;width:1px;height:24px;background:#ededed"></div>
<div class="c n" style="left:0px;top:52px;width:38px;text-align:right">102</div>
<div class="c" style="left:45px;top:52px;width:390px;overflow:hidden">This background is amazing<svg width="17" height="15" viewBox="0 0 17 15" style="vertical-align:-3px;overflow:visible"><g transform="translate(1,0)"><circle cx="7.5" cy="7.5" r="6.7" fill="#f7c43e"/><circle cx="7.5" cy="7.5" r="6.7" fill="none" stroke="#e09a1c" stroke-width="0.5"/><path d="M5 7.6C3 6.2 2.6 5.2 2.9 4.4 3.3 3.6 4.3 3.6 5 4.4 5.7 3.6 6.7 3.6 7 4.4 7.3 5.2 6.9 6.2 5 7.6z M10 7.6C8 6.2 7.7 5.2 8 4.4 8.3 3.6 9.3 3.6 10 4.4 10.7 3.6 11.7 3.6 12 4.4 12.4 5.2 12 6.2 10 7.6z" fill="#e8283b"/><path d="M4.3 9.6Q7.5 13 10.7 9.6z" fill="#6b3a1a"/></g></svg></div>
<div class="c n" style="left:438px;top:52px;width:86px;text-align:right">5757</div>
<div class="c n" style="left:531px;top:52px;">1654</div>
<div class="c n" style="left:606px;top:52px;">2015-08-10 21:23:57.505</div>
<div class="c n" style="left:792px;top:52px;">2015-12-08 15:30:56.866218</div>
<div class="c n" style="left:974px;top:52px;width:56px;text-align:right">4659</div>
<div style="left:0px;top:76px;width:1069px;height:24px;background:#ffffff"></div>
<div style="left:41px;top:76px;width:1px;height:24px;background:#f2f2f2"></div>
<div style="left:438px;top:76px;width:1px;height:24px;background:#f2f2f2"></div>
<div style="left:527px;top:76px;width:1px;height:24px;background:#f2f2f2"></div>
<div style="left:601px;top:76px;width:1px;height:24px;background:#f2f2f2"></div>
<div style="left:788px;top:76px;width:1px;height:24px;background:#f2f2f2"></div>
<div style="left:974px;top:76px;width:1px;height:24px;background:#f2f2f2"></div>
<div style="left:1033px;top:76px;width:1px;height:24px;background:#f2f2f2"></div>
<div class="c n" style="left:0px;top:76px;width:38px;text-align:right">103</div>
<div class="c" style="left:45px;top:76px;width:390px;overflow:hidden">Love this dress so much <svg width="17" height="15" viewBox="0 0 17 15" style="vertical-align:-3px;overflow:visible"><g transform="translate(1,0)"><circle cx="7.5" cy="7.5" r="6.7" fill="#f7c43e"/><circle cx="7.5" cy="7.5" r="6.7" fill="none" stroke="#e09a1c" stroke-width="0.5"/><path d="M5 7.6C3 6.2 2.6 5.2 2.9 4.4 3.3 3.6 4.3 3.6 5 4.4 5.7 3.6 6.7 3.6 7 4.4 7.3 5.2 6.9 6.2 5 7.6z M10 7.6C8 6.2 7.7 5.2 8 4.4 8.3 3.6 9.3 3.6 10 4.4 10.7 3.6 11.7 3.6 12 4.4 12.4 5.2 12 6.2 10 7.6z" fill="#e8283b"/><path d="M4.3 9.6Q7.5 13 10.7 9.6z" fill="#6b3a1a"/></g></svg> so nice for summer!</div>
<div class="c n" style="left:438px;top:76px;width:86px;text-align:right">7308</div>
<div class="c n" style="left:531px;top:76px;">12082</div>
<div class="c n" style="left:606px;top:76px;">2015-08-14 17:09:42.024</div>
<div class="c n" style="left:792px;top:76px;">2015-12-08 15:30:56.902289</div>
<div class="c n" style="left:974px;top:76px;width:56px;text-align:right">7070</div>
<div style="left:0px;top:100px;width:1069px;height:24px;background:#f4f4f4"></div>
<div style="left:41px;top:100px;width:1px;height:24px;background:#ededed"></div>
<div style="left:438px;top:100px;width:1px;height:24px;background:#ededed"></div>
<div style="left:527px;top:100px;width:1px;height:24px;background:#ededed"></div>
<div style="left:601px;top:100px;width:1px;height:24px;background:#ededed"></div>
<div style="left:788px;top:100px;width:1px;height:24px;background:#ededed"></div>
<div style="left:974px;top:100px;width:1px;height:24px;background:#ededed"></div>
<div style="left:1033px;top:100px;width:1px;height:24px;background:#ededed"></div>
<div class="c n" style="left:0px;top:100px;width:38px;text-align:right">105</div>
<div class="c" style="left:45px;top:100px;width:390px;overflow:hidden">Love!</div>
<div class="c n" style="left:438px;top:100px;width:86px;text-align:right">5569</div>
<div class="c n" style="left:531px;top:100px;">2777</div>
<div class="c n" style="left:606px;top:100px;">2015-12-06 10:37:39.44</div>
<div class="c n" style="left:792px;top:100px;">2015-12-08 15:30:56.984729</div>
<div class="c n" style="left:974px;top:100px;width:56px;text-align:right">16285</div>
<div style="left:0px;top:124px;width:1069px;height:24px;background:#ffffff"></div>
<div style="left:41px;top:124px;width:1px;height:24px;background:#f2f2f2"></div>
<div style="left:438px;top:124px;width:1px;height:24px;background:#f2f2f2"></div>
<div style="left:527px;top:124px;width:1px;height:24px;background:#f2f2f2"></div>
<div style="left:601px;top:124px;width:1px;height:24px;background:#f2f2f2"></div>
<div style="left:788px;top:124px;width:1px;height:24px;background:#f2f2f2"></div>
<div style="left:974px;top:124px;width:1px;height:24px;background:#f2f2f2"></div>
<div style="left:1033px;top:124px;width:1px;height:24px;background:#f2f2f2"></div>
<div class="c n" style="left:0px;top:124px;width:38px;text-align:right">106</div>
<div class="c" style="left:45px;top:124px;width:390px;overflow:hidden">Thank u @emily</div>
<div class="c n" style="left:438px;top:124px;width:86px;text-align:right">94</div>
<div class="c n" style="left:531px;top:124px;">94</div>
<div class="c n" style="left:606px;top:124px;">2015-10-11 20:39:56.992</div>
<div class="c n" style="left:792px;top:124px;">2015-12-08 15:30:57.031655</div>
<div class="c n" style="left:974px;top:124px;width:56px;text-align:right">11832</div>
<div style="left:0px;top:148px;width:1069px;height:24px;background:#f4f4f4"></div>
<div style="left:41px;top:148px;width:1px;height:24px;background:#ededed"></div>
<div style="left:438px;top:148px;width:1px;height:24px;background:#ededed"></div>
<div style="left:527px;top:148px;width:1px;height:24px;background:#ededed"></div>
<div style="left:601px;top:148px;width:1px;height:24px;background:#ededed"></div>
<div style="left:788px;top:148px;width:1px;height:24px;background:#ededed"></div>
<div style="left:974px;top:148px;width:1px;height:24px;background:#ededed"></div>
<div style="left:1033px;top:148px;width:1px;height:24px;background:#ededed"></div>
<div class="c n" style="left:0px;top:148px;width:38px;text-align:right">107</div>
<div class="c" style="left:45px;top:148px;width:390px;overflow:hidden"><svg width="17" height="15" viewBox="0 0 17 15" style="vertical-align:-3px;overflow:visible"><g transform="translate(1,0)"><path d="M7.5 13.2C2.6 9.6 0.8 7.2 0.8 4.7 0.8 2.6 2.4 1.2 4.2 1.2 5.6 1.2 6.8 2 7.5 3.2 8.2 2 9.4 1.2 10.8 1.2 12.6 1.2 14.2 2.6 14.2 4.7 14.2 7.2 12.4 9.6 7.5 13.2z" fill="#e8283b" stroke="#b8101f" stroke-width="0.5"/><ellipse cx="4.2" cy="4.2" rx="1.4" ry="1" fill="#fff" fill-opacity="0.45"/></g></svg><svg width="17" height="15" viewBox="0 0 17 15" style="vertical-align:-3px;overflow:visible"><g transform="translate(1,0)"><path d="M7.5 13.2C2.6 9.6 0.8 7.2 0.8 4.7 0.8 2.6 2.4 1.2 4.2 1.2 5.6 1.2 6.8 2 7.5 3.2 8.2 2 9.4 1.2 10.8 1.2 12.6 1.2 14.2 2.6 14.2 4.7 14.2 7.2 12.4 9.6 7.5 13.2z" fill="#e8283b" stroke="#b8101f" stroke-width="0.5"/><ellipse cx="4.2" cy="4.2" rx="1.4" ry="1" fill="#fff" fill-opacity="0.45"/></g></svg><svg width="17" height="15" viewBox="0 0 17 15" style="vertical-align:-3px;overflow:visible"><g transform="translate(1,0)"><path d="M7.5 13.2C2.6 9.6 0.8 7.2 0.8 4.7 0.8 2.6 2.4 1.2 4.2 1.2 5.6 1.2 6.8 2 7.5 3.2 8.2 2 9.4 1.2 10.8 1.2 12.6 1.2 14.2 2.6 14.2 4.7 14.2 7.2 12.4 9.6 7.5 13.2z" fill="#e8283b" stroke="#b8101f" stroke-width="0.5"/><ellipse cx="4.2" cy="4.2" rx="1.4" ry="1" fill="#fff" fill-opacity="0.45"/></g></svg></div>
<div class="c n" style="left:438px;top:148px;width:86px;text-align:right">5569</div>
<div class="c n" style="left:531px;top:148px;">5216</div>
<div class="c n" style="left:606px;top:148px;">2015-11-24 22:02:58.828</div>
<div class="c n" style="left:792px;top:148px;">2015-12-08 15:30:57.072241</div>
<div class="c n" style="left:974px;top:148px;width:56px;text-align:right">15451</div>
<div style="left:0px;top:172px;width:1069px;height:24px;background:#ffffff"></div>
<div style="left:41px;top:172px;width:1px;height:24px;background:#f2f2f2"></div>
<div style="left:438px;top:172px;width:1px;height:24px;background:#f2f2f2"></div>
<div style="left:527px;top:172px;width:1px;height:24px;background:#f2f2f2"></div>
<div style="left:601px;top:172px;width:1px;height:24px;background:#f2f2f2"></div>
<div style="left:788px;top:172px;width:1px;height:24px;background:#f2f2f2"></div>
<div style="left:974px;top:172px;width:1px;height:24px;background:#f2f2f2"></div>
<div style="left:1033px;top:172px;width:1px;height:24px;background:#f2f2f2"></div>
<div class="c n" style="left:0px;top:172px;width:38px;text-align:right">108</div>
<div class="c" style="left:45px;top:172px;width:390px;overflow:hidden">Love the glasses!</div>
<div class="c n" style="left:438px;top:172px;width:86px;text-align:right">4347</div>
<div class="c n" style="left:531px;top:172px;">7239</div>
<div class="c n" style="left:606px;top:172px;">2015-08-01 14:24:44.783</div>
<div class="c n" style="left:792px;top:172px;">2015-12-08 15:30:57.105485</div>
<div class="c n" style="left:974px;top:172px;width:56px;text-align:right">5465</div>
<div style="left:0px;top:196px;width:1069px;height:24px;background:#f4f4f4"></div>
<div style="left:41px;top:196px;width:1px;height:24px;background:#ededed"></div>
<div style="left:438px;top:196px;width:1px;height:24px;background:#ededed"></div>
<div style="left:527px;top:196px;width:1px;height:24px;background:#ededed"></div>
<div style="left:601px;top:196px;width:1px;height:24px;background:#ededed"></div>
<div style="left:788px;top:196px;width:1px;height:24px;background:#ededed"></div>
<div style="left:974px;top:196px;width:1px;height:24px;background:#ededed"></div>
<div style="left:1033px;top:196px;width:1px;height:24px;background:#ededed"></div>
<div class="c n" style="left:0px;top:196px;width:38px;text-align:right">109</div>
<div class="c" style="left:45px;top:196px;width:390px;overflow:hidden">Supercool<svg width="17" height="15" viewBox="0 0 17 15" style="vertical-align:-3px;overflow:visible"><g transform="translate(1,0)"><path d="M7.5 0.6L8.8 4.6 12.4 1.8 11 5.8 14.6 6.2 11.2 8.2 13.6 12.2 9.4 10.2 8.4 14.4 6.6 10.6 2.6 13.4 4 9.2 0.4 8 4 6.2 1.8 2.4 5.8 4.4z" fill="#f47a3a"/><path d="M7.5 4L8.4 6.6 10.6 5.8 9.6 7.8 11.2 9 8.8 9.2 8 11.2 6.8 9.6 4.6 10.2 5.4 8 4 6.6 6.4 6.6z" fill="#fbd35a"/></g></svg><svg width="17" height="15" viewBox="0 0 17 15" style="vertical-align:-3px;overflow:visible"><g transform="translate(1,0)"><path d="M7.5 0.6L8.8 4.6 12.4 1.8 11 5.8 14.6 6.2 11.2 8.2 13.6 12.2 9.4 10.2 8.4 14.4 6.6 10.6 2.6 13.4 4 9.2 0.4 8 4 6.2 1.8 2.4 5.8 4.4z" fill="#f47a3a"/><path d="M7.5 4L8.4 6.6 10.6 5.8 9.6 7.8 11.2 9 8.8 9.2 8 11.2 6.8 9.6 4.6 10.2 5.4 8 4 6.6 6.4 6.6z" fill="#fbd35a"/></g></svg><svg width="17" height="15" viewBox="0 0 17 15" style="vertical-align:-3px;overflow:visible"><g transform="translate(1,0)"><path d="M7.5 0.6L8.8 4.6 12.4 1.8 11 5.8 14.6 6.2 11.2 8.2 13.6 12.2 9.4 10.2 8.4 14.4 6.6 10.6 2.6 13.4 4 9.2 0.4 8 4 6.2 1.8 2.4 5.8 4.4z" fill="#f47a3a"/><path d="M7.5 4L8.4 6.6 10.6 5.8 9.6 7.8 11.2 9 8.8 9.2 8 11.2 6.8 9.6 4.6 10.2 5.4 8 4 6.6 6.4 6.6z" fill="#fbd35a"/></g></svg></div>
<div class="c n" style="left:438px;top:196px;width:86px;text-align:right">2609</div>
<div class="c n" style="left:531px;top:196px;">4820</div>
<div class="c n" style="left:606px;top:196px;">2015-09-04 09:28:30.842</div>
<div class="c n" style="left:792px;top:196px;">2015-12-08 15:30:57.140823</div>
<div class="c n" style="left:974px;top:196px;width:56px;text-align:right">8873</div>
<div style="left:0px;top:220px;width:1069px;height:24px;background:#ffffff"></div>
<div style="left:41px;top:220px;width:1px;height:24px;background:#f2f2f2"></div>
<div style="left:438px;top:220px;width:1px;height:24px;background:#f2f2f2"></div>
<div style="left:527px;top:220px;width:1px;height:24px;background:#f2f2f2"></div>
<div style="left:601px;top:220px;width:1px;height:24px;background:#f2f2f2"></div>
<div style="left:788px;top:220px;width:1px;height:24px;background:#f2f2f2"></div>
<div style="left:974px;top:220px;width:1px;height:24px;background:#f2f2f2"></div>
<div style="left:1033px;top:220px;width:1px;height:24px;background:#f2f2f2"></div>
<div class="c n" style="left:0px;top:220px;width:38px;text-align:right">110</div>
<div class="c" style="left:45px;top:220px;width:390px;overflow:hidden">Would love to! @mith <svg width="17" height="15" viewBox="0 0 17 15" style="vertical-align:-3px;overflow:visible"><g transform="translate(1,0)"><circle cx="7.5" cy="7.5" r="6.7" fill="#f7c43e"/><circle cx="7.5" cy="7.5" r="6.7" fill="none" stroke="#e09a1c" stroke-width="0.5"/><ellipse cx="5" cy="5.6" rx="0.9" ry="1.3" fill="#5a3510"/><ellipse cx="10" cy="5.6" rx="0.9" ry="1.3" fill="#5a3510"/><path d="M3.6 8.6h7.8q-0.6 3.4-3.9 3.4t-3.9-3.4z" fill="#fff" stroke="#6b3a1a" stroke-width="0.7"/><path d="M3.8 9.8h7.4" stroke="#8a8a8a" stroke-width="0.4"/></g></svg></div>
<div class="c n" style="left:438px;top:220px;width:86px;text-align:right">5027</div>
<div class="c n" style="left:531px;top:220px;">5027</div>
<div class="c n" style="left:606px;top:220px;">2015-08-18 20:27:10.945</div>
<div class="c n" style="left:792px;top:220px;">2015-12-08 15:30:57.166027</div>
<div class="c n" style="left:974px;top:220px;width:56px;text-align:right">6029</div>
<div style="left:0px;top:244px;width:1069px;height:24px;background:#f4f4f4"></div>
<div style="left:41px;top:244px;width:1px;height:24px;background:#ededed"></div>
<div style="left:438px;top:244px;width:1px;height:24px;background:#ededed"></div>
<div style="left:527px;top:244px;width:1px;height:24px;background:#ededed"></div>
<div style="left:601px;top:244px;width:1px;height:24px;background:#ededed"></div>
<div style="left:788px;top:244px;width:1px;height:24px;background:#ededed"></div>
<div style="left:974px;top:244px;width:1px;height:24px;background:#ededed"></div>
<div style="left:1033px;top:244px;width:1px;height:24px;background:#ededed"></div>
<div class="c n" style="left:0px;top:244px;width:38px;text-align:right">111</div>
<div class="c" style="left:45px;top:244px;width:390px;overflow:hidden">Love the blouse!</div>
<div class="c n" style="left:438px;top:244px;width:86px;text-align:right">4118</div>
<div class="c n" style="left:531px;top:244px;">186</div>
<div class="c n" style="left:606px;top:244px;">2015-08-18 23:00:33.919</div>
<div class="c n" style="left:792px;top:244px;">2015-12-08 15:30:57.203625</div>
<div class="c n" style="left:974px;top:244px;width:56px;text-align:right">7454</div>
<div style="left:0px;top:268px;width:1069px;height:24px;background:#ffffff"></div>
<div style="left:41px;top:268px;width:1px;height:24px;background:#f2f2f2"></div>
<div style="left:438px;top:268px;width:1px;height:24px;background:#f2f2f2"></div>
<div style="left:527px;top:268px;width:1px;height:24px;background:#f2f2f2"></div>
<div style="left:601px;top:268px;width:1px;height:24px;background:#f2f2f2"></div>
<div style="left:788px;top:268px;width:1px;height:24px;background:#f2f2f2"></div>
<div style="left:974px;top:268px;width:1px;height:24px;background:#f2f2f2"></div>
<div style="left:1033px;top:268px;width:1px;height:24px;background:#f2f2f2"></div>
<div class="c n" style="left:0px;top:268px;width:38px;text-align:right">112</div>
<div class="c" style="left:45px;top:268px;width:390px;overflow:hidden"><svg width="17" height="15" viewBox="0 0 17 15" style="vertical-align:-3px;overflow:visible"><g transform="translate(1,0)"><path d="M7.5 0.8L9.3 5.4 14.2 5.6 10.4 8.7 11.7 13.6 7.5 10.8 3.3 13.6 4.6 8.7 0.8 5.6 5.7 5.4z" fill="#fcd25a" stroke="#eab02a" stroke-width="0.5"/><path d="M7.5 3.5L8.4 6.4 11.3 6.5 9 8.3 9.8 11.2 7.5 9.6 5.2 11.2 6 8.3 3.7 6.5 6.6 6.4z" fill="#fff3b0"/></g></svg><svg width="17" height="15" viewBox="0 0 17 15" style="vertical-align:-3px;overflow:visible"><g transform="translate(1,0)"><path d="M7.5 0.8L9.3 5.4 14.2 5.6 10.4 8.7 11.7 13.6 7.5 10.8 3.3 13.6 4.6 8.7 0.8 5.6 5.7 5.4z" fill="#fcd25a" stroke="#eab02a" stroke-width="0.5"/><path d="M7.5 3.5L8.4 6.4 11.3 6.5 9 8.3 9.8 11.2 7.5 9.6 5.2 11.2 6 8.3 3.7 6.5 6.6 6.4z" fill="#fff3b0"/></g></svg><svg width="17" height="15" viewBox="0 0 17 15" style="vertical-align:-3px;overflow:visible"><g transform="translate(1,0)"><path d="M7.5 0.8L9.3 5.4 14.2 5.6 10.4 8.7 11.7 13.6 7.5 10.8 3.3 13.6 4.6 8.7 0.8 5.6 5.7 5.4z" fill="#fcd25a" stroke="#eab02a" stroke-width="0.5"/><path d="M7.5 3.5L8.4 6.4 11.3 6.5 9 8.3 9.8 11.2 7.5 9.6 5.2 11.2 6 8.3 3.7 6.5 6.6 6.4z" fill="#fff3b0"/></g></svg></div>
<div class="c n" style="left:438px;top:268px;width:86px;text-align:right">5569</div>
<div class="c n" style="left:531px;top:268px;">4877</div>
<div class="c n" style="left:606px;top:268px;">2015-11-30 12:54:49.735</div>
<div class="c n" style="left:792px;top:268px;">2015-12-08 15:30:57.244144</div>
<div class="c n" style="left:974px;top:268px;width:56px;text-align:right">15914</div>
<div style="left:0px;top:292px;width:1069px;height:24px;background:#f4f4f4"></div>
<div style="left:41px;top:292px;width:1px;height:24px;background:#ededed"></div>
<div style="left:438px;top:292px;width:1px;height:24px;background:#ededed"></div>
<div style="left:527px;top:292px;width:1px;height:24px;background:#ededed"></div>
<div style="left:601px;top:292px;width:1px;height:24px;background:#ededed"></div>
<div style="left:788px;top:292px;width:1px;height:24px;background:#ededed"></div>
<div style="left:974px;top:292px;width:1px;height:24px;background:#ededed"></div>
<div style="left:1033px;top:292px;width:1px;height:24px;background:#ededed"></div>
<div class="c n" style="left:0px;top:292px;width:38px;text-align:right">113</div>
<div class="c" style="left:45px;top:292px;width:390px;overflow:hidden">Love that jacket! Outfit is fab <svg width="17" height="15" viewBox="0 0 17 15" style="vertical-align:-3px;overflow:visible"><g transform="translate(1,0)"><g fill="#e0c19e" stroke="#b39371" stroke-width="0.5"><rect x="0.9" y="4.6" width="5" height="10.4" rx="2.4" transform="rotate(-10 3.4 10)"/><rect x="8.1" y="4.6" width="5" height="10.4" rx="2.4" transform="rotate(10 10.6 10)"/></g><g fill="#555"><path d="M2 2.8l.9-1.6.9 1.6z"/><path d="M4.6 1.3h1.6l-.8 1.5z"/><path d="M8.2 1.3h1.6l-.8 1.5z"/><path d="M10.4 2.8l.9-1.6.9 1.6z"/></g></g></svg></div>
<div class="c n" style="left:438px;top:292px;width:86px;text-align:right">7308</div>
<div class="c n" style="left:531px;top:292px;">3075</div>
<div class="c n" style="left:606px;top:292px;">2015-08-24 19:09:34.776</div>
<div class="c n" style="left:792px;top:292px;">2015-12-08 15:30:57.280947</div>
<div class="c n" style="left:974px;top:292px;width:56px;text-align:right">8037</div>
<div style="left:0px;top:316px;width:1069px;height:24px;background:#ffffff"></div>
<div style="left:41px;top:316px;width:1px;height:24px;background:#f2f2f2"></div>
<div style="left:438px;top:316px;width:1px;height:24px;background:#f2f2f2"></div>
<div style="left:527px;top:316px;width:1px;height:24px;background:#f2f2f2"></div>
<div style="left:601px;top:316px;width:1px;height:24px;background:#f2f2f2"></div>
<div style="left:788px;top:316px;width:1px;height:24px;background:#f2f2f2"></div>
<div style="left:974px;top:316px;width:1px;height:24px;background:#f2f2f2"></div>
<div style="left:1033px;top:316px;width:1px;height:24px;background:#f2f2f2"></div>
<div class="c n" style="left:0px;top:316px;width:38px;text-align:right">114</div>
<div class="c" style="left:45px;top:316px;width:390px;overflow:hidden">Jacket <svg width="17" height="15" viewBox="0 0 17 15" style="vertical-align:-3px;overflow:visible"><g transform="translate(1,0)"><path d="M7.6 0.8C8.6 3.4 12.8 5.6 12.8 9.4 12.8 12.2 10.6 14.2 7.5 14.2 4.4 14.2 2.2 12.2 2.2 9.4 2.2 7.2 3.6 5.8 4.4 4.6 4.6 6 5.2 6.8 6 7.2 6 4.6 6.8 2.6 7.6 0.8z" fill="#f0642a"/><path d="M7.5 7C8.2 8.6 10.2 9.6 10.2 11.4 10.2 13 9 14 7.5 14 6 14 4.8 13 4.8 11.4 4.8 10.2 5.6 9.6 6.2 9 6.6 9.8 7 10 7.4 10 7 9 7 8 7.5 7z" fill="#fbc23e"/></g></svg></div>
<div class="c n" style="left:438px;top:316px;width:86px;text-align:right">1780</div>
<div class="c n" style="left:531px;top:316px;">1365</div>
<div class="c n" style="left:606px;top:316px;">2015-07-12 06:20:07.091</div>
<div class="c n" style="left:792px;top:316px;">2015-12-08 15:30:57.307644</div>
<div class="c n" style="left:974px;top:316px;width:56px;text-align:right">2538</div>
<div style="left:0px;top:340px;width:1069px;height:24px;background:#f4f4f4"></div>
<div style="left:41px;top:340px;width:1px;height:24px;background:#ededed"></div>
<div style="left:438px;top:340px;width:1px;height:24px;background:#ededed"></div>
<div style="left:527px;top:340px;width:1px;height:24px;background:#ededed"></div>
<div style="left:601px;top:340px;width:1px;height:24px;background:#ededed"></div>
<div style="left:788px;top:340px;width:1px;height:24px;background:#ededed"></div>
<div style="left:974px;top:340px;width:1px;height:24px;background:#ededed"></div>
<div style="left:1033px;top:340px;width:1px;height:24px;background:#ededed"></div>
<div class="c n" style="left:0px;top:340px;width:38px;text-align:right">115</div>
<div class="c" style="left:45px;top:340px;width:390px;overflow:hidden"><svg width="17" height="15" viewBox="0 0 17 15" style="vertical-align:-3px;overflow:visible"><g transform="translate(1,0)"><path d="M7.5 13.2C2.6 9.6 0.8 7.2 0.8 4.7 0.8 2.6 2.4 1.2 4.2 1.2 5.6 1.2 6.8 2 7.5 3.2 8.2 2 9.4 1.2 10.8 1.2 12.6 1.2 14.2 2.6 14.2 4.7 14.2 7.2 12.4 9.6 7.5 13.2z" fill="#f9c93c" stroke="#dca21a" stroke-width="0.5"/><ellipse cx="4.2" cy="4.2" rx="1.4" ry="1" fill="#fff" fill-opacity="0.45"/></g></svg><svg width="17" height="15" viewBox="0 0 17 15" style="vertical-align:-3px;overflow:visible"><g transform="translate(1,0)"><path d="M7.5 13.2C2.6 9.6 0.8 7.2 0.8 4.7 0.8 2.6 2.4 1.2 4.2 1.2 5.6 1.2 6.8 2 7.5 3.2 8.2 2 9.4 1.2 10.8 1.2 12.6 1.2 14.2 2.6 14.2 4.7 14.2 7.2 12.4 9.6 7.5 13.2z" fill="#f9c93c" stroke="#dca21a" stroke-width="0.5"/><ellipse cx="4.2" cy="4.2" rx="1.4" ry="1" fill="#fff" fill-opacity="0.45"/></g></svg><svg width="17" height="15" viewBox="0 0 17 15" style="vertical-align:-3px;overflow:visible"><g transform="translate(1,0)"><path d="M7.5 13.2C2.6 9.6 0.8 7.2 0.8 4.7 0.8 2.6 2.4 1.2 4.2 1.2 5.6 1.2 6.8 2 7.5 3.2 8.2 2 9.4 1.2 10.8 1.2 12.6 1.2 14.2 2.6 14.2 4.7 14.2 7.2 12.4 9.6 7.5 13.2z" fill="#f9c93c" stroke="#dca21a" stroke-width="0.5"/><ellipse cx="4.2" cy="4.2" rx="1.4" ry="1" fill="#fff" fill-opacity="0.45"/></g></svg></div>
<div class="c n" style="left:438px;top:340px;width:86px;text-align:right">5569</div>
<div class="c n" style="left:531px;top:340px;">5969</div>
<div class="c n" style="left:606px;top:340px;">2015-09-13 14:44:32.209</div>
<div class="c n" style="left:792px;top:340px;">2015-12-08 15:30:57.34342</div>
<div class="c n" style="left:974px;top:340px;width:56px;text-align:right">9382</div>
<div style="left:0px;top:364px;width:1069px;height:24px;background:#ffffff"></div>
<div style="left:41px;top:364px;width:1px;height:24px;background:#f2f2f2"></div>
<div style="left:438px;top:364px;width:1px;height:24px;background:#f2f2f2"></div>
<div style="left:527px;top:364px;width:1px;height:24px;background:#f2f2f2"></div>
<div style="left:601px;top:364px;width:1px;height:24px;background:#f2f2f2"></div>
<div style="left:788px;top:364px;width:1px;height:24px;background:#f2f2f2"></div>
<div style="left:974px;top:364px;width:1px;height:24px;background:#f2f2f2"></div>
<div style="left:1033px;top:364px;width:1px;height:24px;background:#f2f2f2"></div>
<div class="c n" style="left:0px;top:364px;width:38px;text-align:right">116</div>
<div class="c" style="left:45px;top:364px;width:390px;overflow:hidden">@emily thank you soooo much beautiful!!!! To God Be The Glory!!!!</div>
<div class="c n" style="left:438px;top:364px;width:86px;text-align:right">12431</div>
<div class="c n" style="left:531px;top:364px;">12431</div>
<div class="c n" style="left:606px;top:364px;">2015-10-30 13:55:18.745</div>
<div class="c n" style="left:792px;top:364px;">2015-12-08 15:30:57.373218</div>
<div class="c n" style="left:974px;top:364px;width:56px;text-align:right">13256</div>
<div style="left:0px;top:388px;width:1069px;height:24px;background:#f4f4f4"></div>
<div style="left:41px;top:388px;width:1px;height:24px;background:#ededed"></div>
<div style="left:438px;top:388px;width:1px;height:24px;background:#ededed"></div>
<div style="left:527px;top:388px;width:1px;height:24px;background:#ededed"></div>
<div style="left:601px;top:388px;width:1px;height:24px;background:#ededed"></div>
<div style="left:788px;top:388px;width:1px;height:24px;background:#ededed"></div>
<div style="left:974px;top:388px;width:1px;height:24px;background:#ededed"></div>
<div style="left:1033px;top:388px;width:1px;height:24px;background:#ededed"></div>
<div class="c n" style="left:0px;top:388px;width:38px;text-align:right">117</div>
<div class="c" style="left:45px;top:388px;width:390px;overflow:hidden">you are so pretty x</div>
<div class="c n" style="left:438px;top:388px;width:86px;text-align:right">8180</div>
<div class="c n" style="left:531px;top:388px;">12005</div>
<div class="c n" style="left:606px;top:388px;">2015-10-11 18:28:20.447</div>
<div class="c n" style="left:792px;top:388px;">2015-12-08 15:30:57.408816</div>
<div class="c n" style="left:974px;top:388px;width:56px;text-align:right">11829</div>
<div style="left:0px;top:412px;width:1069px;height:24px;background:#ffffff"></div>
<div style="left:41px;top:412px;width:1px;height:24px;background:#f2f2f2"></div>
<div style="left:438px;top:412px;width:1px;height:24px;background:#f2f2f2"></div>
<div style="left:527px;top:412px;width:1px;height:24px;background:#f2f2f2"></div>
<div style="left:601px;top:412px;width:1px;height:24px;background:#f2f2f2"></div>
<div style="left:788px;top:412px;width:1px;height:24px;background:#f2f2f2"></div>
<div style="left:974px;top:412px;width:1px;height:24px;background:#f2f2f2"></div>
<div style="left:1033px;top:412px;width:1px;height:24px;background:#f2f2f2"></div>
<div class="c n" style="left:0px;top:412px;width:38px;text-align:right">118</div>
<div class="c" style="left:45px;top:412px;width:390px;overflow:hidden">Ur legs are to die for<svg width="17" height="15" viewBox="0 0 17 15" style="vertical-align:-3px;overflow:visible"><g transform="translate(1,0)"><g fill="#f4c23c" stroke="#d39a1e" stroke-width="0.5"><rect x="0.9" y="4.6" width="5" height="10.4" rx="2.4" transform="rotate(-10 3.4 10)"/><rect x="8.1" y="4.6" width="5" height="10.4" rx="2.4" transform="rotate(10 10.6 10)"/></g><g fill="#555"><path d="M2 2.8l.9-1.6.9 1.6z"/><path d="M4.6 1.3h1.6l-.8 1.5z"/><path d="M8.2 1.3h1.6l-.8 1.5z"/><path d="M10.4 2.8l.9-1.6.9 1.6z"/></g></g></svg><svg width="17" height="15" viewBox="0 0 17 15" style="vertical-align:-3px;overflow:visible"><g transform="translate(1,0)"><path d="M7.5 13.6C2.6 10 0.8 7.6 0.8 5.1 0.8 3 2.4 1.6 4.2 1.6 5.6 1.6 6.8 2.4 7.5 3.6 8.2 2.4 9.4 1.6 10.8 1.6 12.6 1.6 14.2 3 14.2 5.1 14.2 7.6 12.4 10 7.5 13.6z" fill="#e64fa6" stroke="#b82b7c" stroke-width="0.5"/><path d="M2.5 8.5l1 .4-.4 1zM12 3l.6.6-.8.2z" fill="#fff"/><path d="M9.5 4.5Q10 6 11.5 6.5 10 7 9.5 8.5 9 7 7.5 6.5 9 6 9.5 4.5z" fill="#fff" fill-opacity="0.8"/></g></svg></div>
<div class="c n" style="left:438px;top:412px;width:86px;text-align:right">9940</div>
<div class="c n" style="left:531px;top:412px;">7239</div>
<div class="c n" style="left:606px;top:412px;">2015-08-05 13:26:43.077</div>
<div class="c n" style="left:792px;top:412px;">2015-12-08 15:30:57.443741</div>
<div class="c n" style="left:974px;top:412px;width:56px;text-align:right">5978</div>
<div style="left:0px;top:436px;width:1069px;height:24px;background:#f4f4f4"></div>
<div style="left:41px;top:436px;width:1px;height:24px;background:#ededed"></div>
<div style="left:438px;top:436px;width:1px;height:24px;background:#ededed"></div>
<div style="left:527px;top:436px;width:1px;height:24px;background:#ededed"></div>
<div style="left:601px;top:436px;width:1px;height:24px;background:#ededed"></div>
<div style="left:788px;top:436px;width:1px;height:24px;background:#ededed"></div>
<div style="left:974px;top:436px;width:1px;height:24px;background:#ededed"></div>
<div style="left:1033px;top:436px;width:1px;height:24px;background:#ededed"></div>
<div class="c n" style="left:0px;top:436px;width:38px;text-align:right">119</div>
<div class="c" style="left:45px;top:436px;width:390px;overflow:hidden">Thank you beautiful @laurel</div>
<div class="c n" style="left:438px;top:436px;width:86px;text-align:right">5559</div>
<div class="c n" style="left:531px;top:436px;">5559</div>
<div class="c n" style="left:606px;top:436px;">2015-10-01 22:05:51.961</div>
<div class="c n" style="left:792px;top:436px;">2015-12-08 15:30:57.480509</div>
<div class="c n" style="left:974px;top:436px;width:56px;text-align:right">10937</div>
<div style="left:0px;top:460px;width:1069px;height:24px;background:#ffffff"></div>
<div style="left:41px;top:460px;width:1px;height:24px;background:#f2f2f2"></div>
<div style="left:438px;top:460px;width:1px;height:24px;background:#f2f2f2"></div>
<div style="left:527px;top:460px;width:1px;height:24px;background:#f2f2f2"></div>
<div style="left:601px;top:460px;width:1px;height:24px;background:#f2f2f2"></div>
<div style="left:788px;top:460px;width:1px;height:24px;background:#f2f2f2"></div>
<div style="left:974px;top:460px;width:1px;height:24px;background:#f2f2f2"></div>
<div style="left:1033px;top:460px;width:1px;height:24px;background:#f2f2f2"></div>
<div class="c n" style="left:0px;top:460px;width:38px;text-align:right">120</div>
<div class="c" style="left:45px;top:460px;width:390px;overflow:hidden">Thank you! <svg width="17" height="15" viewBox="0 0 17 15" style="vertical-align:-3px;overflow:visible"><g transform="translate(1,0)"><circle cx="7.5" cy="7.5" r="6.7" fill="#f7c43e"/><circle cx="7.5" cy="7.5" r="6.7" fill="none" stroke="#e09a1c" stroke-width="0.5"/><path d="M3.6 5.4q1.2-1 2.4 0" fill="none" stroke="#5a3510" stroke-width="0.8"/><path d="M9.2 4.2l1.8 1.2-1.8 1.2" fill="none" stroke="#5a3510" stroke-width="0.8"/><path d="M6.4 9.6q1.2-0.2 1 0.8q1 0.4 0 1" fill="none" stroke="#5a3510" stroke-width="0.8"/><path d="M11.6 14.4C9.6 13 9.2 12 9.5 11.2 9.8 10.4 10.8 10.4 11.4 11.1 12 10.4 13 10.4 13.3 11.2 13.6 12 13.3 13 11.6 14.4z" fill="#e8283b"/></g></svg></div>
<div class="c n" style="left:438px;top:460px;width:86px;text-align:right">11123</div>
<div class="c n" style="left:531px;top:460px;">11123</div>
<div class="c n" style="left:606px;top:460px;">2015-10-11 13:20:46.351</div>
<div class="c n" style="left:792px;top:460px;">2015-12-08 15:30:57.523717</div>
<div class="c n" style="left:974px;top:460px;width:56px;text-align:right">11756</div>
<div style="left:0px;top:484px;width:1069px;height:24px;background:#f4f4f4"></div>
<div style="left:41px;top:484px;width:1px;height:24px;background:#ededed"></div>
<div style="left:438px;top:484px;width:1px;height:24px;background:#ededed"></div>
<div style="left:527px;top:484px;width:1px;height:24px;background:#ededed"></div>
<div style="left:601px;top:484px;width:1px;height:24px;background:#ededed"></div>
<div style="left:788px;top:484px;width:1px;height:24px;background:#ededed"></div>
<div style="left:974px;top:484px;width:1px;height:24px;background:#ededed"></div>
<div style="left:1033px;top:484px;width:1px;height:24px;background:#ededed"></div>
<div class="c n" style="left:0px;top:484px;width:38px;text-align:right">121</div>
<div class="c" style="left:45px;top:484px;width:390px;overflow:hidden">Love this!</div>
<div class="c n" style="left:438px;top:484px;width:86px;text-align:right">5569</div>
<div class="c n" style="left:531px;top:484px;">8691</div>
<div class="c n" style="left:606px;top:484px;">2015-10-22 09:42:05.573</div>
<div class="c n" style="left:792px;top:484px;">2015-12-08 15:30:57.573733</div>
<div class="c n" style="left:974px;top:484px;width:56px;text-align:right">12659</div>
<div style="left:0px;top:508px;width:1069px;height:24px;background:#ffffff"></div>
<div style="left:41px;top:508px;width:1px;height:24px;background:#f2f2f2"></div>
<div style="left:438px;top:508px;width:1px;height:24px;background:#f2f2f2"></div>
<div style="left:527px;top:508px;width:1px;height:24px;background:#f2f2f2"></div>
<div style="left:601px;top:508px;width:1px;height:24px;background:#f2f2f2"></div>
<div style="left:788px;top:508px;width:1px;height:24px;background:#f2f2f2"></div>
<div style="left:974px;top:508px;width:1px;height:24px;background:#f2f2f2"></div>
<div style="left:1033px;top:508px;width:1px;height:24px;background:#f2f2f2"></div>
<div class="c n" style="left:0px;top:508px;width:38px;text-align:right">122</div>
<div class="c" style="left:45px;top:508px;width:390px;overflow:hidden">Amazing pastel theme <svg width="17" height="15" viewBox="0 0 17 15" style="vertical-align:-3px;overflow:visible"><g transform="translate(1,0)"><circle cx="7.5" cy="7.5" r="6.7" fill="#f7c43e"/><circle cx="7.5" cy="7.5" r="6.7" fill="none" stroke="#e09a1c" stroke-width="0.5"/><ellipse cx="5" cy="5.6" rx="0.9" ry="1.3" fill="#5a3510"/><ellipse cx="10" cy="5.6" rx="0.9" ry="1.3" fill="#5a3510"/><path d="M3.6 8.6h7.8q-0.6 3.4-3.9 3.4t-3.9-3.4z" fill="#fff" stroke="#6b3a1a" stroke-width="0.7"/><path d="M3.8 9.8h7.4" stroke="#8a8a8a" stroke-width="0.4"/></g></svg></div>
<div class="c n" style="left:438px;top:508px;width:86px;text-align:right">5757</div>
<div class="c n" style="left:531px;top:508px;">5879</div>
<div class="c n" style="left:606px;top:508px;">2015-08-13 20:59:06.623</div>
<div class="c n" style="left:792px;top:508px;">2015-12-08 15:30:57.605037</div>
<div class="c n" style="left:974px;top:508px;width:56px;text-align:right">6929</div>
<div style="left:0px;top:532px;width:1069px;height:24px;background:#f4f4f4"></div>
<div style="left:41px;top:532px;width:1px;height:24px;background:#ededed"></div>
<div style="left:438px;top:532px;width:1px;height:24px;background:#ededed"></div>
<div style="left:527px;top:532px;width:1px;height:24px;background:#ededed"></div>
<div style="left:601px;top:532px;width:1px;height:24px;background:#ededed"></div>
<div style="left:788px;top:532px;width:1px;height:24px;background:#ededed"></div>
<div style="left:974px;top:532px;width:1px;height:24px;background:#ededed"></div>
<div style="left:1033px;top:532px;width:1px;height:24px;background:#ededed"></div>
<div class="c n" style="left:0px;top:532px;width:38px;text-align:right">123</div>
<div class="c" style="left:45px;top:532px;width:390px;overflow:hidden">Love! <svg width="17" height="15" viewBox="0 0 17 15" style="vertical-align:-3px;overflow:visible"><g transform="translate(1,0)"><path d="M8.5 1.5Q9.3 6.4 13.6 7.5 9.3 8.6 8.5 13.5 7.7 8.6 3.4 7.5 7.7 6.4 8.5 1.5z" fill="#f9e27a"/><path d="M3.5 1Q3.8 2.9 5.4 3.3 3.8 3.7 3.5 5.6 3.2 3.7 1.6 3.3 3.2 2.9 3.5 1z" fill="#f9e27a"/></g></svg><svg width="17" height="15" viewBox="0 0 17 15" style="vertical-align:-3px;overflow:visible"><g transform="translate(1,0)"><path d="M8.5 1.5Q9.3 6.4 13.6 7.5 9.3 8.6 8.5 13.5 7.7 8.6 3.4 7.5 7.7 6.4 8.5 1.5z" fill="#f9e27a"/><path d="M3.5 1Q3.8 2.9 5.4 3.3 3.8 3.7 3.5 5.6 3.2 3.7 1.6 3.3 3.2 2.9 3.5 1z" fill="#f9e27a"/></g></svg></div>
<div class="c n" style="left:438px;top:532px;width:86px;text-align:right">5569</div>
<div class="c n" style="left:531px;top:532px;">6334</div>
<div class="c n" style="left:606px;top:532px;">2015-11-21 14:13:57.187</div>
<div class="c n" style="left:792px;top:532px;">2015-12-08 15:30:57.641314</div>
<div class="c n" style="left:974px;top:532px;width:56px;text-align:right">15194</div>
<div style="left:0px;top:556px;width:1069px;height:24px;background:#ffffff"></div>
<div style="left:41px;top:556px;width:1px;height:24px;background:#f2f2f2"></div>
<div style="left:438px;top:556px;width:1px;height:24px;background:#f2f2f2"></div>
<div style="left:527px;top:556px;width:1px;height:24px;background:#f2f2f2"></div>
<div style="left:601px;top:556px;width:1px;height:24px;background:#f2f2f2"></div>
<div style="left:788px;top:556px;width:1px;height:24px;background:#f2f2f2"></div>
<div style="left:974px;top:556px;width:1px;height:24px;background:#f2f2f2"></div>
<div style="left:1033px;top:556px;width:1px;height:24px;background:#f2f2f2"></div>
<div class="c n" style="left:0px;top:556px;width:38px;text-align:right">124</div>
<div class="c" style="left:45px;top:556px;width:390px;overflow:hidden">Beautiful!! <svg width="17" height="15" viewBox="0 0 17 15" style="vertical-align:-3px;overflow:visible"><g transform="translate(1,0)"><path d="M5.5 14C1.8 11.4 0.6 9.6 0.6 7.9 0.6 6.4 1.8 5.4 3.1 5.4 4.1 5.4 5 6 5.5 6.9 6 6 6.9 5.4 7.9 5.4 9.2 5.4 10.4 6.4 10.4 7.9 10.4 9.6 9.2 11.4 5.5 14z" fill="#e64fa6"/><path d="M11.2 6.2C9 4.6 8.3 3.6 8.3 2.6 8.3 1.7 9 1 9.8 1 10.4 1 10.9 1.4 11.2 1.9 11.5 1.4 12 1 12.6 1 13.4 1 14.1 1.7 14.1 2.6 14.1 3.6 13.4 4.6 11.2 6.2z" fill="#e64fa6"/></g></svg><svg width="17" height="15" viewBox="0 0 17 15" style="vertical-align:-3px;overflow:visible"><g transform="translate(1,0)"><path d="M5.5 14C1.8 11.4 0.6 9.6 0.6 7.9 0.6 6.4 1.8 5.4 3.1 5.4 4.1 5.4 5 6 5.5 6.9 6 6 6.9 5.4 7.9 5.4 9.2 5.4 10.4 6.4 10.4 7.9 10.4 9.6 9.2 11.4 5.5 14z" fill="#e64fa6"/><path d="M11.2 6.2C9 4.6 8.3 3.6 8.3 2.6 8.3 1.7 9 1 9.8 1 10.4 1 10.9 1.4 11.2 1.9 11.5 1.4 12 1 12.6 1 13.4 1 14.1 1.7 14.1 2.6 14.1 3.6 13.4 4.6 11.2 6.2z" fill="#e64fa6"/></g></svg></div>
<div class="c n" style="left:438px;top:556px;width:86px;text-align:right">5569</div>
<div class="c n" style="left:531px;top:556px;">5733</div>
<div class="c n" style="left:606px;top:556px;">2015-11-04 12:24:41.227</div>
<div class="c n" style="left:792px;top:556px;">2015-12-08 15:30:57.684731</div>
<div class="c n" style="left:974px;top:556px;width:56px;text-align:right">13680</div>
<div style="left:0px;top:580px;width:1069px;height:24px;background:#f4f4f4"></div>
<div style="left:41px;top:580px;width:1px;height:24px;background:#ededed"></div>
<div style="left:438px;top:580px;width:1px;height:24px;background:#ededed"></div>
<div style="left:527px;top:580px;width:1px;height:24px;background:#ededed"></div>
<div style="left:601px;top:580px;width:1px;height:24px;background:#ededed"></div>
<div style="left:788px;top:580px;width:1px;height:24px;background:#ededed"></div>
<div style="left:974px;top:580px;width:1px;height:24px;background:#ededed"></div>
<div style="left:1033px;top:580px;width:1px;height:24px;background:#ededed"></div>
<div class="c n" style="left:0px;top:580px;width:38px;text-align:right">125</div>
<div class="c" style="left:45px;top:580px;width:390px;overflow:hidden">Love this photo! Your hair is gorgeous <svg width="17" height="15" viewBox="0 0 17 15" style="vertical-align:-3px;overflow:visible"><g transform="translate(1,0)"><circle cx="7.5" cy="7.5" r="6.7" fill="#f7c43e"/><circle cx="7.5" cy="7.5" r="6.7" fill="none" stroke="#e09a1c" stroke-width="0.5"/><path d="M3.6 5.4q1.2-1 2.4 0" fill="none" stroke="#5a3510" stroke-width="0.8"/><path d="M9.2 4.2l1.8 1.2-1.8 1.2" fill="none" stroke="#5a3510" stroke-width="0.8"/><path d="M6.4 9.6q1.2-0.2 1 0.8q1 0.4 0 1" fill="none" stroke="#5a3510" stroke-width="0.8"/><path d="M11.6 14.4C9.6 13 9.2 12 9.5 11.2 9.8 10.4 10.8 10.4 11.4 11.1 12 10.4 13 10.4 13.3 11.2 13.6 12 13.3 13 11.6 14.4z" fill="#e8283b"/></g></svg> x</div>
<div class="c n" style="left:438px;top:580px;width:86px;text-align:right">7237</div>
<div class="c n" style="left:531px;top:580px;">8957</div>
<div class="c n" style="left:606px;top:580px;">2015-08-26 16:03:27.513</div>
<div class="c n" style="left:792px;top:580px;">2015-12-08 15:30:57.715562</div>
<div class="c n" style="left:974px;top:580px;width:56px;text-align:right">8011</div>
<div style="left:0px;top:604px;width:1069px;height:24px;background:#ffffff"></div>
<div style="left:41px;top:604px;width:1px;height:24px;background:#f2f2f2"></div>
<div style="left:438px;top:604px;width:1px;height:24px;background:#f2f2f2"></div>
<div style="left:527px;top:604px;width:1px;height:24px;background:#f2f2f2"></div>
<div style="left:601px;top:604px;width:1px;height:24px;background:#f2f2f2"></div>
<div style="left:788px;top:604px;width:1px;height:24px;background:#f2f2f2"></div>
<div style="left:974px;top:604px;width:1px;height:24px;background:#f2f2f2"></div>
<div style="left:1033px;top:604px;width:1px;height:24px;background:#f2f2f2"></div>
<div class="c n" style="left:0px;top:604px;width:38px;text-align:right">126</div>
<div class="c" style="left:45px;top:604px;width:390px;overflow:hidden">@Emily Thank you<svg width="17" height="15" viewBox="0 0 17 15" style="vertical-align:-3px;overflow:visible"><g transform="translate(1,0)"><circle cx="8.5" cy="2.4" r="1.6" fill="#3a2a20"/><path d="M7.6 4.2L9.8 4.6 9.6 7.6 13.6 12.6 8.6 11.6 4 13.4 6.6 9 7.4 7z" fill="#d8262e"/><path d="M7.8 5l-3.6 1.4M9.6 5l2.6-2.6M5.6 12.6l-2.4 1.6M8.4 11.8l-.6 2.6" stroke="#3a2a20" stroke-width="0.9"/></g></svg></div>
<div class="c n" style="left:438px;top:604px;width:86px;text-align:right">11936</div>
<div class="c n" style="left:531px;top:604px;">11936</div>
<div class="c n" style="left:606px;top:604px;">2015-11-27 10:58:46.792</div>
<div class="c n" style="left:792px;top:604px;">2015-12-08 15:30:57.762048</div>
<div class="c n" style="left:974px;top:604px;width:56px;text-align:right">15661</div>
<div style="left:0px;top:628px;width:1069px;height:24px;background:#f4f4f4"></div>
<div style="left:41px;top:628px;width:1px;height:24px;background:#ededed"></div>
<div style="left:438px;top:628px;width:1px;height:24px;background:#ededed"></div>
<div style="left:527px;top:628px;width:1px;height:24px;background:#ededed"></div>
<div style="left:601px;top:628px;width:1px;height:24px;background:#ededed"></div>
<div style="left:788px;top:628px;width:1px;height:24px;background:#ededed"></div>
<div style="left:974px;top:628px;width:1px;height:24px;background:#ededed"></div>
<div style="left:1033px;top:628px;width:1px;height:24px;background:#ededed"></div>
<div class="c n" style="left:0px;top:628px;width:38px;text-align:right">127</div>
<div class="c" style="left:45px;top:628px;width:390px;overflow:hidden">Stunning!</div>
<div class="c n" style="left:438px;top:628px;width:86px;text-align:right">12141</div>
<div class="c n" style="left:531px;top:628px;">8303</div>
<div class="c n" style="left:606px;top:628px;">2015-11-13 22:30:16.253</div>
<div class="c n" style="left:792px;top:628px;">2015-12-08 15:30:57.808192</div>
<div class="c n" style="left:974px;top:628px;width:56px;text-align:right">14524</div>
<div style="left:0px;top:652px;width:1069px;height:24px;background:#ffffff"></div>
<div style="left:41px;top:652px;width:1px;height:24px;background:#f2f2f2"></div>
<div style="left:438px;top:652px;width:1px;height:24px;background:#f2f2f2"></div>
<div style="left:527px;top:652px;width:1px;height:24px;background:#f2f2f2"></div>
<div style="left:601px;top:652px;width:1px;height:24px;background:#f2f2f2"></div>
<div style="left:788px;top:652px;width:1px;height:24px;background:#f2f2f2"></div>
<div style="left:974px;top:652px;width:1px;height:24px;background:#f2f2f2"></div>
<div style="left:1033px;top:652px;width:1px;height:24px;background:#f2f2f2"></div>
<div class="c n" style="left:0px;top:652px;width:38px;text-align:right">128</div>
<div class="c" style="left:45px;top:652px;width:390px;overflow:hidden"><svg width="17" height="15" viewBox="0 0 17 15" style="vertical-align:-3px;overflow:visible"><g transform="translate(1,0)"><path d="M7.5 13.2C2.6 9.6 0.8 7.2 0.8 4.7 0.8 2.6 2.4 1.2 4.2 1.2 5.6 1.2 6.8 2 7.5 3.2 8.2 2 9.4 1.2 10.8 1.2 12.6 1.2 14.2 2.6 14.2 4.7 14.2 7.2 12.4 9.6 7.5 13.2z" fill="#e8283b" stroke="#b8101f" stroke-width="0.5"/><ellipse cx="4.2" cy="4.2" rx="1.4" ry="1" fill="#fff" fill-opacity="0.45"/></g></svg><svg width="17" height="15" viewBox="0 0 17 15" style="vertical-align:-3px;overflow:visible"><g transform="translate(1,0)"><path d="M7.5 13.2C2.6 9.6 0.8 7.2 0.8 4.7 0.8 2.6 2.4 1.2 4.2 1.2 5.6 1.2 6.8 2 7.5 3.2 8.2 2 9.4 1.2 10.8 1.2 12.6 1.2 14.2 2.6 14.2 4.7 14.2 7.2 12.4 9.6 7.5 13.2z" fill="#e8283b" stroke="#b8101f" stroke-width="0.5"/><ellipse cx="4.2" cy="4.2" rx="1.4" ry="1" fill="#fff" fill-opacity="0.45"/></g></svg><svg width="17" height="15" viewBox="0 0 17 15" style="vertical-align:-3px;overflow:visible"><g transform="translate(1,0)"><path d="M7.5 13.2C2.6 9.6 0.8 7.2 0.8 4.7 0.8 2.6 2.4 1.2 4.2 1.2 5.6 1.2 6.8 2 7.5 3.2 8.2 2 9.4 1.2 10.8 1.2 12.6 1.2 14.2 2.6 14.2 4.7 14.2 7.2 12.4 9.6 7.5 13.2z" fill="#e8283b" stroke="#b8101f" stroke-width="0.5"/><ellipse cx="4.2" cy="4.2" rx="1.4" ry="1" fill="#fff" fill-opacity="0.45"/></g></svg></div>
<div class="c n" style="left:438px;top:652px;width:86px;text-align:right">5569</div>
<div class="c n" style="left:531px;top:652px;">7308</div>
<div class="c n" style="left:606px;top:652px;">2015-10-15 10:02:47.99</div>
<div class="c n" style="left:792px;top:652px;">2015-12-08 15:30:57.855466</div>
<div class="c n" style="left:974px;top:652px;width:56px;text-align:right">12145</div>
<div style="left:0px;top:676px;width:1069px;height:24px;background:#f4f4f4"></div>
<div style="left:41px;top:676px;width:1px;height:24px;background:#ededed"></div>
<div style="left:438px;top:676px;width:1px;height:24px;background:#ededed"></div>
<div style="left:527px;top:676px;width:1px;height:24px;background:#ededed"></div>
<div style="left:601px;top:676px;width:1px;height:24px;background:#ededed"></div>
<div style="left:788px;top:676px;width:1px;height:24px;background:#ededed"></div>
<div style="left:974px;top:676px;width:1px;height:24px;background:#ededed"></div>
<div style="left:1033px;top:676px;width:1px;height:24px;background:#ededed"></div>
<div class="c n" style="left:0px;top:676px;width:38px;text-align:right">129</div>
<div class="c" style="left:45px;top:676px;width:390px;overflow:hidden">Beautiful action shot!</div>
<div class="c n" style="left:438px;top:676px;width:86px;text-align:right">7372</div>
<div class="c n" style="left:531px;top:676px;">9946</div>
<div class="c n" style="left:606px;top:676px;">2015-08-14 15:15:21.247</div>
<div class="c n" style="left:792px;top:676px;">2015-12-08 15:30:57.893964</div>
<div class="c n" style="left:974px;top:676px;width:56px;text-align:right">2893</div>
<div style="left:0px;top:700px;width:1069px;height:24px;background:#ffffff"></div>
<div style="left:41px;top:700px;width:1px;height:24px;background:#f2f2f2"></div>
<div style="left:438px;top:700px;width:1px;height:24px;background:#f2f2f2"></div>
<div style="left:527px;top:700px;width:1px;height:24px;background:#f2f2f2"></div>
<div style="left:601px;top:700px;width:1px;height:24px;background:#f2f2f2"></div>
<div style="left:788px;top:700px;width:1px;height:24px;background:#f2f2f2"></div>
<div style="left:974px;top:700px;width:1px;height:24px;background:#f2f2f2"></div>
<div style="left:1033px;top:700px;width:1px;height:24px;background:#f2f2f2"></div>
<div class="c n" style="left:0px;top:700px;width:38px;text-align:right">130</div>
<div class="c" style="left:45px;top:700px;width:390px;overflow:hidden"><svg width="17" height="15" viewBox="0 0 17 15" style="vertical-align:-3px;overflow:visible"><g transform="translate(1,0)"><path d="M7.5 13.2C2.6 9.6 0.8 7.2 0.8 4.7 0.8 2.6 2.4 1.2 4.2 1.2 5.6 1.2 6.8 2 7.5 3.2 8.2 2 9.4 1.2 10.8 1.2 12.6 1.2 14.2 2.6 14.2 4.7 14.2 7.2 12.4 9.6 7.5 13.2z" fill="#e8283b" stroke="#b8101f" stroke-width="0.5"/><ellipse cx="4.2" cy="4.2" rx="1.4" ry="1" fill="#fff" fill-opacity="0.45"/></g></svg><svg width="17" height="15" viewBox="0 0 17 15" style="vertical-align:-3px;overflow:visible"><g transform="translate(1,0)"><path d="M7.5 13.2C2.6 9.6 0.8 7.2 0.8 4.7 0.8 2.6 2.4 1.2 4.2 1.2 5.6 1.2 6.8 2 7.5 3.2 8.2 2 9.4 1.2 10.8 1.2 12.6 1.2 14.2 2.6 14.2 4.7 14.2 7.2 12.4 9.6 7.5 13.2z" fill="#e8283b" stroke="#b8101f" stroke-width="0.5"/><ellipse cx="4.2" cy="4.2" rx="1.4" ry="1" fill="#fff" fill-opacity="0.45"/></g></svg></div>
<div class="c n" style="left:438px;top:700px;width:86px;text-align:right">8995</div>
<div class="c n" style="left:531px;top:700px;">9001</div>
<div class="c n" style="left:606px;top:700px;">2015-08-07 19:43:50.923</div>
<div class="c n" style="left:792px;top:700px;">2015-12-08 15:30:57.926282</div>
<div class="c n" style="left:974px;top:700px;width:56px;text-align:right">6464</div>
<div style="left:0px;top:724px;width:1069px;height:24px;background:#f4f4f4"></div>
<div style="left:41px;top:724px;width:1px;height:24px;background:#ededed"></div>
<div style="left:438px;top:724px;width:1px;height:24px;background:#ededed"></div>
<div style="left:527px;top:724px;width:1px;height:24px;background:#ededed"></div>
<div style="left:601px;top:724px;width:1px;height:24px;background:#ededed"></div>
<div style="left:788px;top:724px;width:1px;height:24px;background:#ededed"></div>
<div style="left:974px;top:724px;width:1px;height:24px;background:#ededed"></div>
<div style="left:1033px;top:724px;width:1px;height:24px;background:#ededed"></div>
<div class="c n" style="left:0px;top:724px;width:38px;text-align:right">131</div>
<div class="c" style="left:45px;top:724px;width:390px;overflow:hidden"><svg width="17" height="15" viewBox="0 0 17 15" style="vertical-align:-3px;overflow:visible"><g transform="translate(1,0)"><g fill="#f7a8cf" stroke="#e886b6" stroke-width="0.4"><circle cx="7.5" cy="3.6" r="3"/><circle cx="11.3" cy="6.4" r="3"/><circle cx="9.9" cy="10.9" r="3"/><circle cx="5.1" cy="10.9" r="3"/><circle cx="3.7" cy="6.4" r="3"/></g><circle cx="7.5" cy="7.6" r="1.8" fill="#f2d45a"/><circle cx="7.5" cy="7.6" r="0.9" fill="#e04f6f"/></g></svg></div>
<div class="c n" style="left:438px;top:724px;width:86px;text-align:right">5569</div>
<div class="c n" style="left:531px;top:724px;">7910</div>
<div class="c n" style="left:606px;top:724px;">2015-08-24 21:08:52.771</div>
<div class="c n" style="left:792px;top:724px;">2015-12-08 15:30:57.962664</div>
<div class="c n" style="left:974px;top:724px;width:56px;text-align:right">8074</div>
<div style="left:0px;top:748px;width:1069px;height:24px;background:#ffffff"></div>
<div style="left:41px;top:748px;width:1px;height:24px;background:#f2f2f2"></div>
<div style="left:438px;top:748px;width:1px;height:24px;background:#f2f2f2"></div>
<div style="left:527px;top:748px;width:1px;height:24px;background:#f2f2f2"></div>
<div style="left:601px;top:748px;width:1px;height:24px;background:#f2f2f2"></div>
<div style="left:788px;top:748px;width:1px;height:24px;background:#f2f2f2"></div>
<div style="left:974px;top:748px;width:1px;height:24px;background:#f2f2f2"></div>
<div style="left:1033px;top:748px;width:1px;height:24px;background:#f2f2f2"></div>
<div class="c n" style="left:0px;top:748px;width:38px;text-align:right">132</div>
<div class="c" style="left:45px;top:748px;width:390px;overflow:hidden">Love that jumper! <svg width="17" height="15" viewBox="0 0 17 15" style="vertical-align:-3px;overflow:visible"><g transform="translate(1,0)"><path d="M1.8 8.6C3.4 5.2 6.6 4.2 9.2 5.4 7.8 8.2 4.8 9.6 1.8 8.6z" fill="#c7833a"/><path d="M6.4 13.8C6.6 10 9 7.6 12.2 7.8 12.6 11 10.2 13.6 6.4 13.8z" fill="#a35a22"/><path d="M6.8 3.2C7.6 1.6 9 0.8 10.4 1.2 9.8 2.8 8.4 3.6 6.8 3.2z" fill="#d9933f"/><path d="M1.2 13.6L9.8 4.8" stroke="#6b3b16" stroke-width="0.6"/></g></svg></div>
<div class="c n" style="left:438px;top:748px;width:86px;text-align:right">8995</div>
<div class="c n" style="left:531px;top:748px;">4118</div>
<div class="c n" style="left:606px;top:748px;">2015-10-24 18:15:03.692</div>
<div class="c n" style="left:792px;top:748px;">2015-12-08 15:30:57.99569</div>
<div class="c n" style="left:974px;top:748px;width:56px;text-align:right">12884</div>
</div>
<div style="left:368px;top:899px;width:1069px;height:36px;background:#eeeeee"></div>
<div style="left:368px;top:899px;width:1069px;height:1px;background:#dcdcdc"></div>
<div style="left:380px;top:907px;width:124px;height:20px;background:#e3e3e3;border-radius:5px;box-shadow:0 0 0 0.5px rgba(0,0,0,0.06)"></div>
<div class="btn" style="left:380px;top:907px;width:61px;height:20px;"></div>
<div class="t" style="left:380px;top:907px;width:61px;text-align:center;font-size:12.5px;color:#222;letter-spacing:0.2px">Data</div>
<div class="t" style="left:441px;top:907px;width:63px;text-align:center;font-size:12.5px;color:#333;letter-spacing:0.2px">Structure</div>
<div class="btn" style="left:514px;top:907px;width:76px;height:20px;"></div>
<svg style="position:absolute;left:522px;top:910px;" width="14" height="14" viewBox="0 0 14 14"><path d="M7 1.5v11M1.5 7h11" stroke="#333" stroke-width="1.3"/></svg>
<div class="t" style="left:547px;top:907px;font-size:12.5px;color:#222;letter-spacing:0.3px">Row</div>
<div class="t" style="left:824px;top:908px;font-size:12px;color:#8a8a8a;letter-spacing:0.55px">1-300 of 859 rows</div>
<div class="btn" style="left:1157px;top:907px;width:76px;height:20px;"></div>
<div class="t" style="left:1157px;top:907px;width:76px;text-align:center;font-size:12.5px;color:#222;letter-spacing:0.2px">Columns</div>
<div style="left:1243px;top:907px;width:76px;height:20px;background:#3a82f6;border-radius:5px;box-shadow:0 0.5px 1px rgba(0,0,0,0.2)"></div>
<div class="t" style="left:1243px;top:907px;width:76px;text-align:center;font-size:12.5px;color:#fff;letter-spacing:0.2px">Filters</div>
<div class="btn" style="left:1329px;top:907px;width:98px;height:20px;"></div>
<svg style="position:absolute;left:1338px;top:910px;" width="12" height="14" viewBox="0 0 12 14"><path d="M8 2.5L3.5 7 8 11.5" fill="none" stroke="#bbb" stroke-width="1.2"/></svg>
<div style="left:1361px;top:912px;width:1px;height:10px;background:#e0e0e0"></div>
<svg style="position:absolute;left:1371px;top:910px;" width="14" height="14" viewBox="0 0 14 14"><g fill="#333"><rect x="5.39" y="0" width="3.22" height="14.00" rx="1.13" transform="rotate(0 7.0 7.0)"/><rect x="5.39" y="0" width="3.22" height="14.00" rx="1.13" transform="rotate(45 7.0 7.0)"/><rect x="5.39" y="0" width="3.22" height="14.00" rx="1.13" transform="rotate(90 7.0 7.0)"/><rect x="5.39" y="0" width="3.22" height="14.00" rx="1.13" transform="rotate(135 7.0 7.0)"/><circle cx="7.0" cy="7.0" r="5.04"/></g><circle cx="7.0" cy="7.0" r="1.82" fill="#fff"/></svg>
<div style="left:1394px;top:912px;width:1px;height:10px;background:#e0e0e0"></div>
<svg style="position:absolute;left:1406px;top:910px;" width="12" height="14" viewBox="0 0 12 14"><path d="M4 2.5L8.5 7 4 11.5" fill="none" stroke="#333" stroke-width="1.2"/></svg></div></body></html>
